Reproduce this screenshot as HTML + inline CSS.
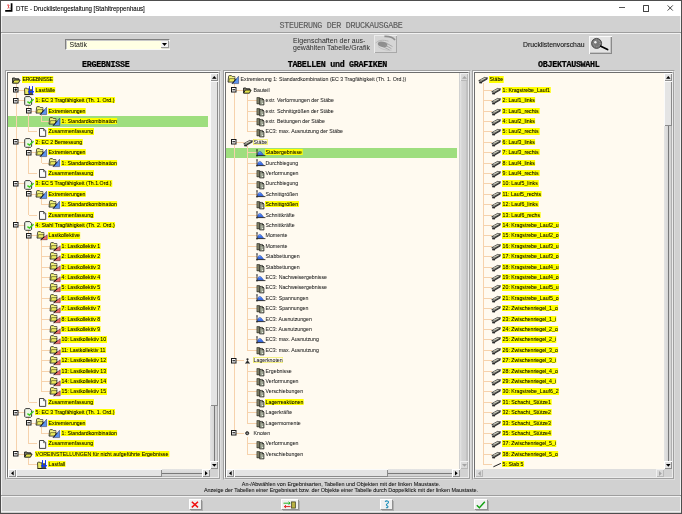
<!DOCTYPE html>
<html><head><meta charset="utf-8"><style>
html,body{margin:0;padding:0;width:682px;height:514px;overflow:hidden;background:#d1d1d1}
body{position:relative;font-family:'Liberation Sans',sans-serif;}
div{box-sizing:content-box}
</style></head><body>
<div style="position:absolute;left:0;top:0;width:682px;height:514px;will-change:transform"><div style="position:absolute;left:0px;top:0px;width:680px;height:512px;border:1px solid #4e4e4e;background:#d1d1d1"></div><div style="position:absolute;left:1px;top:16px;width:678px;height:495px;border:1px solid #f0f0f0;border-top:none"></div><div style="position:absolute;left:1px;top:1px;width:680px;height:15px;background:#ffffff"></div><svg style="position:absolute;left:5px;top:3px;overflow:visible" width="9" height="10" viewBox="0 0 9 10"><path d="M6.6,0.2 V7.9 H0.2" fill="none" stroke="#000" stroke-width="1.7"/><path d="M2.2,2.2 C3.2,1.6 4.4,1.9 3.8,3 L3,3.6 C4.2,3.8 4.2,5 2.6,5.3" fill="none" stroke="#e01818" stroke-width="0.9"/><path d="M4.2,6 h1.4 v-1.6" stroke="#888" stroke-width="0.7" fill="none"/></svg><div style="position:absolute;left:16px;top:3.6px;height:9px;line-height:9px;font-size:6.9px;color:#000;-webkit-text-stroke:0.1px #000;transform:scaleX(0.885);transform-origin:0 0;font-family:'Liberation Sans',sans-serif;white-space:nowrap">DTE - Drucklistengestaltung [Stahltreppenhaus]</div><div style="position:absolute;left:619px;top:7.4px;width:6px;height:0.8px;background:#555"></div><div style="position:absolute;left:643px;top:5.3px;width:4.3px;height:4.3px;border:0.7px solid #444;border-radius:0.6px"></div><svg style="position:absolute;left:666.5px;top:4.8px;overflow:visible" width="7" height="7" viewBox="0 0 7 7"><path d="M0.6,0.4 L5.8,5.6 M5.8,0.4 L0.6,5.6" stroke="#222" stroke-width="0.85"/></svg><div style="position:absolute;left:1px;top:32px;width:680px;height:1px;background:#9e9e9e"></div><div style="position:absolute;left:1px;top:33px;width:680px;height:1px;background:#f2f2f2"></div><div style="position:absolute;left:0;width:682px;top:22.4px;text-align:center;height:9px;line-height:9px;font-family:'Liberation Mono',monospace;font-size:8.4px;letter-spacing:-0.3px;color:#5a5a5a;-webkit-text-stroke:0.1px #5a5a5a;white-space:nowrap">STEUERUNG DER DRUCKAUSGABE</div><div style="position:absolute;left:65px;top:39px;width:105px;height:11px;background:#ffffe4;border-top:1px solid #808080;border-left:1px solid #808080;border-right:1px solid #f8f8f8;border-bottom:1px solid #f8f8f8;box-sizing:border-box"></div><div style="position:absolute;left:66px;top:40px;width:1px;height:9px;background:#c8c8c8"></div><div style="position:absolute;left:66px;top:40px;width:103px;height:1px;background:#c8c8c8"></div><div style="position:absolute;left:69.6px;top:40px;height:9px;line-height:9.4px;font-size:6.9px;color:#111;font-family:'Liberation Sans',sans-serif;">Statik</div><div style="position:absolute;left:161px;top:41px;width:7.5px;height:7px;background:#f4f4f4;box-shadow:inset -1px -1px 0 #9a9a9a, 0.5px 0.5px 0 #c0c0c0"></div><svg style="position:absolute;left:162.3px;top:43.2px;overflow:visible" width="5" height="3" viewBox="0 0 5 3"><path d="M0,0 L5,0 L2.5,3 Z" fill="#000"/></svg><div style="position:absolute;left:293px;top:38.4px;line-height:6.6px;font-size:6.95px;color:#2a2a2a;letter-spacing:0.05px;font-family:'Liberation Sans',sans-serif;white-space:nowrap">Eigenschaften der aus-<br>gewählten Tabelle/Grafik</div><div style="position:absolute;left:374px;top:35px;width:23px;height:18px;background:#d6d6d6;box-shadow:inset 1px 1px 0 #ececec, inset -1px -1px 0 #a8a8a8"></div><svg style="position:absolute;left:374px;top:35px;overflow:visible" width="23" height="18" viewBox="0 0 23 18"><path d="M10.4,1.4 C14,1.2 19,2.4 21,5" fill="none" stroke="#8e8e8e" stroke-width="1.6"/><path d="M1.6,8.2 C4,5.2 9,4.4 14.5,6.2" fill="none" stroke="#b2b2b2" stroke-width="0.9"/><ellipse cx="8.6" cy="9.3" rx="4.9" ry="2.7" transform="rotate(12 8.6 9.3)" fill="#8e8e8e"/><path d="M11.5,7.6 L18.5,11.6 M10.4,9.8 L17.4,13.6 M9,11.6 L15.6,15" fill="none" stroke="#9a9a9a" stroke-width="0.75"/><path d="M4.2,11.6 C7,14.2 12,15.6 17.5,15.2" fill="none" stroke="#b6b6b6" stroke-width="0.6"/></svg><div style="position:absolute;left:523px;top:40.6px;height:8px;line-height:8px;font-size:6.84px;color:#111;-webkit-text-stroke:0.08px #111;font-family:'Liberation Sans',sans-serif;white-space:nowrap">Drucklistenvorschau</div><div style="position:absolute;left:589px;top:36px;width:23px;height:18px;background:#e4e4e4;box-shadow:inset 1px 1px 0 #fafafa, inset -1px -1px 0 #8a8a8a, inset -2px -2px 0 #c4c4c4"></div><svg style="position:absolute;left:589px;top:36px;overflow:visible" width="23" height="18" viewBox="0 0 23 18"><circle cx="7.6" cy="7.4" r="5" fill="#767676" stroke="#444" stroke-width="0.9"/><circle cx="7.6" cy="7.4" r="3.4" fill="none" stroke="#b4b4b4" stroke-width="0.7" stroke-dasharray="0.7 1"/><circle cx="6.4" cy="6.2" r="1.2" fill="#f4f4f4"/><path d="M11.8,10.2 L18.6,13.6" stroke="#000" stroke-width="1.7" stroke-linecap="round"/></svg><div style="position:absolute;left:5.75px;width:200px;top:61.1px;height:9px;line-height:9px;text-align:center;font-family:'Liberation Mono',monospace;font-weight:bold;font-size:8.4px;letter-spacing:-0.3px;color:#000;-webkit-text-stroke:0.2px #000;white-space:nowrap">ERGEBNISSE</div><div style="position:absolute;left:237.3px;width:200px;top:61.1px;height:9px;line-height:9px;text-align:center;font-family:'Liberation Mono',monospace;font-weight:bold;font-size:8.4px;letter-spacing:-0.3px;color:#000;-webkit-text-stroke:0.2px #000;white-space:nowrap">TABELLEN und GRAFIKEN</div><div style="position:absolute;left:468.79999999999995px;width:200px;top:61.1px;height:9px;line-height:9px;text-align:center;font-family:'Liberation Mono',monospace;font-weight:bold;font-size:8.4px;letter-spacing:-0.3px;color:#000;-webkit-text-stroke:0.2px #000;white-space:nowrap">OBJEKTAUSWAHL</div><div style="position:absolute;left:5px;top:70px;width:214px;height:408px;border:1px solid;border-color:#a0a0a0 #dedede #dedede #a0a0a0"></div><div style="position:absolute;left:6px;top:71px;width:212px;height:406px;border:1px solid;border-color:#fafafa #a0a0a0 #a0a0a0 #fafafa"></div><div style="position:absolute;left:7px;top:72px;width:210px;height:404px;border:1px solid;border-color:#6e6e6e #ececec #ececec #6e6e6e"></div><div style="position:absolute;left:8px;top:73px;width:202px;height:396px;overflow:hidden;background:#fffaf0"><div style="position:absolute;left:-8px;top:-73px;width:682px;height:514px"><div style="position:absolute;left:8px;top:116.30px;width:200px;height:10.4px;background:#9ede7e"></div><div style="position:absolute;left:15.50px;top:83.10px;width:1px;height:371.30px;background:#f6d2ac"></div><div style="position:absolute;left:16.00px;top:89.80px;width:9.00px;height:1px;background:#f6d2ac"></div><div style="position:absolute;left:28.30px;top:103.90px;width:1px;height:28.10px;background:#f6d2ac"></div><div style="position:absolute;left:16.00px;top:100.20px;width:9.00px;height:1px;background:#f6d2ac"></div><div style="position:absolute;left:41.30px;top:114.30px;width:1px;height:7.30px;background:#f6d2ac"></div><div style="position:absolute;left:28.80px;top:110.60px;width:8.30px;height:1px;background:#f6d2ac"></div><div style="position:absolute;left:41.80px;top:121.00px;width:8.50px;height:1px;background:#f6d2ac"></div><div style="position:absolute;left:28.80px;top:131.40px;width:8.30px;height:1px;background:#f6d2ac"></div><div style="position:absolute;left:28.30px;top:145.50px;width:1px;height:28.10px;background:#f6d2ac"></div><div style="position:absolute;left:16.00px;top:141.80px;width:9.00px;height:1px;background:#f6d2ac"></div><div style="position:absolute;left:41.30px;top:155.90px;width:1px;height:7.30px;background:#f6d2ac"></div><div style="position:absolute;left:28.80px;top:152.20px;width:8.30px;height:1px;background:#f6d2ac"></div><div style="position:absolute;left:41.80px;top:162.60px;width:8.50px;height:1px;background:#f6d2ac"></div><div style="position:absolute;left:28.80px;top:173.00px;width:8.30px;height:1px;background:#f6d2ac"></div><div style="position:absolute;left:28.30px;top:187.10px;width:1px;height:28.10px;background:#f6d2ac"></div><div style="position:absolute;left:16.00px;top:183.40px;width:9.00px;height:1px;background:#f6d2ac"></div><div style="position:absolute;left:41.30px;top:197.50px;width:1px;height:7.30px;background:#f6d2ac"></div><div style="position:absolute;left:28.80px;top:193.80px;width:8.30px;height:1px;background:#f6d2ac"></div><div style="position:absolute;left:41.80px;top:204.20px;width:8.50px;height:1px;background:#f6d2ac"></div><div style="position:absolute;left:28.80px;top:214.60px;width:8.30px;height:1px;background:#f6d2ac"></div><div style="position:absolute;left:28.30px;top:228.70px;width:1px;height:173.70px;background:#f6d2ac"></div><div style="position:absolute;left:16.00px;top:225.00px;width:9.00px;height:1px;background:#f6d2ac"></div><div style="position:absolute;left:41.30px;top:239.10px;width:1px;height:152.90px;background:#f6d2ac"></div><div style="position:absolute;left:28.80px;top:235.40px;width:8.30px;height:1px;background:#f6d2ac"></div><div style="position:absolute;left:41.80px;top:245.80px;width:8.50px;height:1px;background:#f6d2ac"></div><div style="position:absolute;left:41.80px;top:256.20px;width:8.50px;height:1px;background:#f6d2ac"></div><div style="position:absolute;left:41.80px;top:266.60px;width:8.50px;height:1px;background:#f6d2ac"></div><div style="position:absolute;left:41.80px;top:277.00px;width:8.50px;height:1px;background:#f6d2ac"></div><div style="position:absolute;left:41.80px;top:287.40px;width:8.50px;height:1px;background:#f6d2ac"></div><div style="position:absolute;left:41.80px;top:297.80px;width:8.50px;height:1px;background:#f6d2ac"></div><div style="position:absolute;left:41.80px;top:308.20px;width:8.50px;height:1px;background:#f6d2ac"></div><div style="position:absolute;left:41.80px;top:318.60px;width:8.50px;height:1px;background:#f6d2ac"></div><div style="position:absolute;left:41.80px;top:329.00px;width:8.50px;height:1px;background:#f6d2ac"></div><div style="position:absolute;left:41.80px;top:339.40px;width:8.50px;height:1px;background:#f6d2ac"></div><div style="position:absolute;left:41.80px;top:349.80px;width:8.50px;height:1px;background:#f6d2ac"></div><div style="position:absolute;left:41.80px;top:360.20px;width:8.50px;height:1px;background:#f6d2ac"></div><div style="position:absolute;left:41.80px;top:370.60px;width:8.50px;height:1px;background:#f6d2ac"></div><div style="position:absolute;left:41.80px;top:381.00px;width:8.50px;height:1px;background:#f6d2ac"></div><div style="position:absolute;left:41.80px;top:391.40px;width:8.50px;height:1px;background:#f6d2ac"></div><div style="position:absolute;left:28.80px;top:401.80px;width:8.30px;height:1px;background:#f6d2ac"></div><div style="position:absolute;left:28.30px;top:415.90px;width:1px;height:28.10px;background:#f6d2ac"></div><div style="position:absolute;left:16.00px;top:412.20px;width:9.00px;height:1px;background:#f6d2ac"></div><div style="position:absolute;left:41.30px;top:426.30px;width:1px;height:7.30px;background:#f6d2ac"></div><div style="position:absolute;left:28.80px;top:422.60px;width:8.30px;height:1px;background:#f6d2ac"></div><div style="position:absolute;left:41.80px;top:433.00px;width:8.50px;height:1px;background:#f6d2ac"></div><div style="position:absolute;left:28.80px;top:443.40px;width:8.30px;height:1px;background:#f6d2ac"></div><div style="position:absolute;left:28.30px;top:457.50px;width:1px;height:7.30px;background:#f6d2ac"></div><div style="position:absolute;left:16.00px;top:453.80px;width:9.00px;height:1px;background:#f6d2ac"></div><div style="position:absolute;left:28.80px;top:464.20px;width:8.30px;height:1px;background:#f6d2ac"></div><svg style="position:absolute;left:12.2px;top:76.5px;overflow:visible" width="9" height="7" viewBox="0 0 9 7"><path d="M0.6,6 V1 h2.3 l0.8,0.8 h3.1 v1.3" fill="#8a8a70" stroke="#161616" stroke-width="0.9" stroke-linejoin="round"/><path d="M0.6,6.2 l1.7,-3.2 h5.8 l-1.7,3.2 z" fill="#e4e44c" stroke="#161616" stroke-width="0.9" stroke-linejoin="round"/></svg><div style="position:absolute;left:21.90px;top:76.40px;height:6.2px;line-height:6.2px;padding:0 0.65px;font-size:5.7px;color:#000;letter-spacing:-0.45px;-webkit-text-stroke:0.06px #000;white-space:nowrap;transform:scaleX(0.92);transform-origin:0 0;background:#ffff00;">ERGEBNISSE</div><svg style="position:absolute;left:12.8px;top:87.15px;overflow:visible" width="5.5" height="5.5" viewBox="0 0 5.5 5.5"><rect x="0.5" y="0.5" width="4.5" height="4.5" fill="#fcfcfc" stroke="#1a1a1a" stroke-width="1"/><path d="M1.4,2.75 H4.1" stroke="#000" stroke-width="1"/><path d="M2.75,1.4 V4.1" stroke="#000" stroke-width="1"/></svg><svg style="position:absolute;left:24.4px;top:85.60000000000001px;overflow:visible" width="11" height="9" viewBox="0 0 11 9"><path d="M0.5,3 Q0.5,2.2 1.3,2.2 h1.6 l0.6,0.7 h1.6 v5.6 h-4.3 z" fill="#e8e866" stroke="#24240c" stroke-width="0.8"/><path d="M4.6,3.2 h4.4 v5.3 h-4.4 z" fill="#5a5a30"/><path d="M0.5,8.6 H9.4" stroke="#1c1c0c" stroke-width="0.9"/><path d="M5.5,0.1 v5.6 M8.5,0.1 v5.6" stroke="#1238f0" stroke-width="1"/><path d="M3.9,5 l1.6,3.6 l1.6,-3.6 z M6.9,5 l1.6,3.6 l1.6,-3.6 z" fill="#1238f0"/></svg><div style="position:absolute;left:34.60px;top:86.80px;height:6.2px;line-height:6.2px;padding:0 0.65px;font-size:5.7px;color:#000;letter-spacing:0.0px;-webkit-text-stroke:0.06px #000;white-space:nowrap;transform:scaleX(0.92);transform-origin:0 0;background:#ffff00;">Lastfälle</div><svg style="position:absolute;left:12.8px;top:97.55px;overflow:visible" width="5.5" height="5.5" viewBox="0 0 5.5 5.5"><rect x="0.5" y="0.5" width="4.5" height="4.5" fill="#fcfcfc" stroke="#1a1a1a" stroke-width="1"/><path d="M1.4,2.75 H4.1" stroke="#000" stroke-width="1"/></svg><svg style="position:absolute;left:24px;top:96.3px;overflow:visible" width="10" height="10" viewBox="0 0 10 10"><path d="M1.6,0.6 h4.2 l1.8,1.8 v6 l-1,0.9 h-5 l-0.9,-0.9 v-6.6 z" fill="#eef6e8" stroke="#262626" stroke-width="0.9" stroke-linejoin="round"/><path d="M3.4,5.6 L5.5,7.1 L9.6,3.3" fill="none" stroke="#3ad01a" stroke-width="1.4"/></svg><div style="position:absolute;left:34.60px;top:97.20px;height:6.2px;line-height:6.2px;padding:0 0.65px;font-size:5.7px;color:#000;letter-spacing:0.0px;-webkit-text-stroke:0.06px #000;white-space:nowrap;transform:scaleX(0.92);transform-origin:0 0;background:#ffff00;">1: EC 3 Tragfähigkeit (Th. 1. Ord.)</div><svg style="position:absolute;left:25.6px;top:107.95px;overflow:visible" width="5.5" height="5.5" viewBox="0 0 5.5 5.5"><rect x="0.5" y="0.5" width="4.5" height="4.5" fill="#fcfcfc" stroke="#1a1a1a" stroke-width="1"/><path d="M1.4,2.75 H4.1" stroke="#000" stroke-width="1"/></svg><svg style="position:absolute;left:36.1px;top:106.4px;overflow:visible" width="12" height="10" viewBox="0 0 12 10"><path d="M0.6,1.4 Q0.6,0.6 1.4,0.6 h2 l0.8,0.9 h2.6 v5.6 h-6.8 z" fill="#e8e85c" stroke="#2a2a2a" stroke-width="0.8" stroke-linejoin="round"/><path d="M1.2,2.3 h5.6" stroke="#f8f8b0" stroke-width="0.7"/><path d="M0.6,7.2 L1.6,3.6 H7.4" fill="none" stroke="#303020" stroke-width="0.5"/><path d="M4.2,8.6 L10.6,1.2 V8.6 Z" fill="#5c92ee" stroke="#1a2040" stroke-width="0.45" stroke-linejoin="round"/><path d="M4.2,8.6 L8,4.2" stroke="#000" stroke-width="0.9"/></svg><div style="position:absolute;left:47.80px;top:107.60px;height:6.2px;line-height:6.2px;padding:0 0.65px;font-size:5.7px;color:#000;letter-spacing:0.0px;-webkit-text-stroke:0.06px #000;white-space:nowrap;transform:scaleX(0.92);transform-origin:0 0;background:#ffff00;">Extremierungen</div><svg style="position:absolute;left:49.3px;top:116.8px;overflow:visible" width="12" height="10" viewBox="0 0 12 10"><path d="M0.6,1.4 Q0.6,0.6 1.4,0.6 h2 l0.8,0.9 h2.6 v5.6 h-6.8 z" fill="#e8e85c" stroke="#2a2a2a" stroke-width="0.8" stroke-linejoin="round"/><path d="M1.2,2.3 h5.6" stroke="#f8f8b0" stroke-width="0.7"/><path d="M0.6,7.2 L1.6,3.6 H7.4" fill="none" stroke="#303020" stroke-width="0.5"/><path d="M4.2,8.6 L10.6,1.2 V8.6 Z" fill="#5c92ee" stroke="#1a2040" stroke-width="0.45" stroke-linejoin="round"/><path d="M4.2,8.6 L8,4.2" stroke="#000" stroke-width="0.9"/></svg><div style="position:absolute;left:60.80px;top:118.00px;height:6.2px;line-height:6.2px;padding:0 0.65px;font-size:5.7px;color:#000;letter-spacing:0.0px;-webkit-text-stroke:0.06px #000;white-space:nowrap;transform:scaleX(0.92);transform-origin:0 0;background:#ffff00;">1: Standardkombination</div><svg style="position:absolute;left:39.0px;top:127.5px;overflow:visible" width="8" height="9" viewBox="0 0 8 9"><path d="M0.5,0.5 h4.2 l2,2 v5.9 h-6.2 z" fill="#fbfbfb" stroke="#262626" stroke-width="0.85" stroke-linejoin="round"/><path d="M4.5,0.6 v2.1 h2" fill="none" stroke="#262626" stroke-width="0.6"/></svg><div style="position:absolute;left:47.80px;top:128.40px;height:6.2px;line-height:6.2px;padding:0 0.65px;font-size:5.7px;color:#000;letter-spacing:0.0px;-webkit-text-stroke:0.06px #000;white-space:nowrap;transform:scaleX(0.92);transform-origin:0 0;background:#ffff00;">Zusammenfassung</div><svg style="position:absolute;left:12.8px;top:139.15px;overflow:visible" width="5.5" height="5.5" viewBox="0 0 5.5 5.5"><rect x="0.5" y="0.5" width="4.5" height="4.5" fill="#fcfcfc" stroke="#1a1a1a" stroke-width="1"/><path d="M1.4,2.75 H4.1" stroke="#000" stroke-width="1"/></svg><svg style="position:absolute;left:24px;top:137.9px;overflow:visible" width="10" height="10" viewBox="0 0 10 10"><path d="M1.6,0.6 h4.2 l1.8,1.8 v6 l-1,0.9 h-5 l-0.9,-0.9 v-6.6 z" fill="#eef6e8" stroke="#262626" stroke-width="0.9" stroke-linejoin="round"/><path d="M3.4,5.6 L5.5,7.1 L9.6,3.3" fill="none" stroke="#3ad01a" stroke-width="1.4"/></svg><div style="position:absolute;left:34.60px;top:138.80px;height:6.2px;line-height:6.2px;padding:0 0.65px;font-size:5.7px;color:#000;letter-spacing:0.0px;-webkit-text-stroke:0.06px #000;white-space:nowrap;transform:scaleX(0.92);transform-origin:0 0;background:#ffff00;">2: EC 2 Bemessung</div><svg style="position:absolute;left:25.6px;top:149.55px;overflow:visible" width="5.5" height="5.5" viewBox="0 0 5.5 5.5"><rect x="0.5" y="0.5" width="4.5" height="4.5" fill="#fcfcfc" stroke="#1a1a1a" stroke-width="1"/><path d="M1.4,2.75 H4.1" stroke="#000" stroke-width="1"/></svg><svg style="position:absolute;left:36.1px;top:148.0px;overflow:visible" width="12" height="10" viewBox="0 0 12 10"><path d="M0.6,1.4 Q0.6,0.6 1.4,0.6 h2 l0.8,0.9 h2.6 v5.6 h-6.8 z" fill="#e8e85c" stroke="#2a2a2a" stroke-width="0.8" stroke-linejoin="round"/><path d="M1.2,2.3 h5.6" stroke="#f8f8b0" stroke-width="0.7"/><path d="M0.6,7.2 L1.6,3.6 H7.4" fill="none" stroke="#303020" stroke-width="0.5"/><path d="M4.2,8.6 L10.6,1.2 V8.6 Z" fill="#5c92ee" stroke="#1a2040" stroke-width="0.45" stroke-linejoin="round"/><path d="M4.2,8.6 L8,4.2" stroke="#000" stroke-width="0.9"/></svg><div style="position:absolute;left:47.80px;top:149.20px;height:6.2px;line-height:6.2px;padding:0 0.65px;font-size:5.7px;color:#000;letter-spacing:0.0px;-webkit-text-stroke:0.06px #000;white-space:nowrap;transform:scaleX(0.92);transform-origin:0 0;background:#ffff00;">Extremierungen</div><svg style="position:absolute;left:49.3px;top:158.39999999999998px;overflow:visible" width="12" height="10" viewBox="0 0 12 10"><path d="M0.6,1.4 Q0.6,0.6 1.4,0.6 h2 l0.8,0.9 h2.6 v5.6 h-6.8 z" fill="#e8e85c" stroke="#2a2a2a" stroke-width="0.8" stroke-linejoin="round"/><path d="M1.2,2.3 h5.6" stroke="#f8f8b0" stroke-width="0.7"/><path d="M0.6,7.2 L1.6,3.6 H7.4" fill="none" stroke="#303020" stroke-width="0.5"/><path d="M4.2,8.6 L10.6,1.2 V8.6 Z" fill="#5c92ee" stroke="#1a2040" stroke-width="0.45" stroke-linejoin="round"/><path d="M4.2,8.6 L8,4.2" stroke="#000" stroke-width="0.9"/></svg><div style="position:absolute;left:60.80px;top:159.60px;height:6.2px;line-height:6.2px;padding:0 0.65px;font-size:5.7px;color:#000;letter-spacing:0.0px;-webkit-text-stroke:0.06px #000;white-space:nowrap;transform:scaleX(0.92);transform-origin:0 0;background:#ffff00;">1: Standardkombination</div><svg style="position:absolute;left:39.0px;top:169.10000000000002px;overflow:visible" width="8" height="9" viewBox="0 0 8 9"><path d="M0.5,0.5 h4.2 l2,2 v5.9 h-6.2 z" fill="#fbfbfb" stroke="#262626" stroke-width="0.85" stroke-linejoin="round"/><path d="M4.5,0.6 v2.1 h2" fill="none" stroke="#262626" stroke-width="0.6"/></svg><div style="position:absolute;left:47.80px;top:170.00px;height:6.2px;line-height:6.2px;padding:0 0.65px;font-size:5.7px;color:#000;letter-spacing:0.0px;-webkit-text-stroke:0.06px #000;white-space:nowrap;transform:scaleX(0.92);transform-origin:0 0;background:#ffff00;">Zusammenfassung</div><svg style="position:absolute;left:12.8px;top:180.75px;overflow:visible" width="5.5" height="5.5" viewBox="0 0 5.5 5.5"><rect x="0.5" y="0.5" width="4.5" height="4.5" fill="#fcfcfc" stroke="#1a1a1a" stroke-width="1"/><path d="M1.4,2.75 H4.1" stroke="#000" stroke-width="1"/></svg><svg style="position:absolute;left:24px;top:179.5px;overflow:visible" width="10" height="10" viewBox="0 0 10 10"><path d="M1.6,0.6 h4.2 l1.8,1.8 v6 l-1,0.9 h-5 l-0.9,-0.9 v-6.6 z" fill="#eef6e8" stroke="#262626" stroke-width="0.9" stroke-linejoin="round"/><path d="M3.4,5.6 L5.5,7.1 L9.6,3.3" fill="none" stroke="#3ad01a" stroke-width="1.4"/></svg><div style="position:absolute;left:34.60px;top:180.40px;height:6.2px;line-height:6.2px;padding:0 0.65px;font-size:5.7px;color:#000;letter-spacing:0.0px;-webkit-text-stroke:0.06px #000;white-space:nowrap;transform:scaleX(0.92);transform-origin:0 0;background:#ffff00;">3: EC 5 Tragfähigkeit (Th.1.Ord.)</div><svg style="position:absolute;left:25.6px;top:191.15px;overflow:visible" width="5.5" height="5.5" viewBox="0 0 5.5 5.5"><rect x="0.5" y="0.5" width="4.5" height="4.5" fill="#fcfcfc" stroke="#1a1a1a" stroke-width="1"/><path d="M1.4,2.75 H4.1" stroke="#000" stroke-width="1"/></svg><svg style="position:absolute;left:36.1px;top:189.6px;overflow:visible" width="12" height="10" viewBox="0 0 12 10"><path d="M0.6,1.4 Q0.6,0.6 1.4,0.6 h2 l0.8,0.9 h2.6 v5.6 h-6.8 z" fill="#e8e85c" stroke="#2a2a2a" stroke-width="0.8" stroke-linejoin="round"/><path d="M1.2,2.3 h5.6" stroke="#f8f8b0" stroke-width="0.7"/><path d="M0.6,7.2 L1.6,3.6 H7.4" fill="none" stroke="#303020" stroke-width="0.5"/><path d="M4.2,8.6 L10.6,1.2 V8.6 Z" fill="#5c92ee" stroke="#1a2040" stroke-width="0.45" stroke-linejoin="round"/><path d="M4.2,8.6 L8,4.2" stroke="#000" stroke-width="0.9"/></svg><div style="position:absolute;left:47.80px;top:190.80px;height:6.2px;line-height:6.2px;padding:0 0.65px;font-size:5.7px;color:#000;letter-spacing:0.0px;-webkit-text-stroke:0.06px #000;white-space:nowrap;transform:scaleX(0.92);transform-origin:0 0;background:#ffff00;">Extremierungen</div><svg style="position:absolute;left:49.3px;top:200.0px;overflow:visible" width="12" height="10" viewBox="0 0 12 10"><path d="M0.6,1.4 Q0.6,0.6 1.4,0.6 h2 l0.8,0.9 h2.6 v5.6 h-6.8 z" fill="#e8e85c" stroke="#2a2a2a" stroke-width="0.8" stroke-linejoin="round"/><path d="M1.2,2.3 h5.6" stroke="#f8f8b0" stroke-width="0.7"/><path d="M0.6,7.2 L1.6,3.6 H7.4" fill="none" stroke="#303020" stroke-width="0.5"/><path d="M4.2,8.6 L10.6,1.2 V8.6 Z" fill="#5c92ee" stroke="#1a2040" stroke-width="0.45" stroke-linejoin="round"/><path d="M4.2,8.6 L8,4.2" stroke="#000" stroke-width="0.9"/></svg><div style="position:absolute;left:60.80px;top:201.20px;height:6.2px;line-height:6.2px;padding:0 0.65px;font-size:5.7px;color:#000;letter-spacing:0.0px;-webkit-text-stroke:0.06px #000;white-space:nowrap;transform:scaleX(0.92);transform-origin:0 0;background:#ffff00;">1: Standardkombination</div><svg style="position:absolute;left:39.0px;top:210.70000000000002px;overflow:visible" width="8" height="9" viewBox="0 0 8 9"><path d="M0.5,0.5 h4.2 l2,2 v5.9 h-6.2 z" fill="#fbfbfb" stroke="#262626" stroke-width="0.85" stroke-linejoin="round"/><path d="M4.5,0.6 v2.1 h2" fill="none" stroke="#262626" stroke-width="0.6"/></svg><div style="position:absolute;left:47.80px;top:211.60px;height:6.2px;line-height:6.2px;padding:0 0.65px;font-size:5.7px;color:#000;letter-spacing:0.0px;-webkit-text-stroke:0.06px #000;white-space:nowrap;transform:scaleX(0.92);transform-origin:0 0;background:#ffff00;">Zusammenfassung</div><svg style="position:absolute;left:12.8px;top:222.35px;overflow:visible" width="5.5" height="5.5" viewBox="0 0 5.5 5.5"><rect x="0.5" y="0.5" width="4.5" height="4.5" fill="#fcfcfc" stroke="#1a1a1a" stroke-width="1"/><path d="M1.4,2.75 H4.1" stroke="#000" stroke-width="1"/></svg><svg style="position:absolute;left:24px;top:221.1px;overflow:visible" width="10" height="10" viewBox="0 0 10 10"><path d="M1.6,0.6 h4.2 l1.8,1.8 v6 l-1,0.9 h-5 l-0.9,-0.9 v-6.6 z" fill="#eef6e8" stroke="#262626" stroke-width="0.9" stroke-linejoin="round"/><path d="M3.4,5.6 L5.5,7.1 L9.6,3.3" fill="none" stroke="#3ad01a" stroke-width="1.4"/></svg><div style="position:absolute;left:34.60px;top:222.00px;height:6.2px;line-height:6.2px;padding:0 0.65px;font-size:5.7px;color:#000;letter-spacing:0.0px;-webkit-text-stroke:0.06px #000;white-space:nowrap;transform:scaleX(0.92);transform-origin:0 0;background:#ffff00;">4: Stahl Tragfähigkeit (Th. 2. Ord.)</div><svg style="position:absolute;left:25.6px;top:232.75px;overflow:visible" width="5.5" height="5.5" viewBox="0 0 5.5 5.5"><rect x="0.5" y="0.5" width="4.5" height="4.5" fill="#fcfcfc" stroke="#1a1a1a" stroke-width="1"/><path d="M1.4,2.75 H4.1" stroke="#000" stroke-width="1"/></svg><svg style="position:absolute;left:36.9px;top:231.2px;overflow:visible" width="12" height="10" viewBox="0 0 12 10"><path d="M0.6,1.4 Q0.6,0.6 1.4,0.6 h2 l0.8,0.9 h2.6 v5.6 h-6.8 z" fill="#e8e85c" stroke="#2a2a2a" stroke-width="0.8" stroke-linejoin="round"/><path d="M1.2,2.3 h5.6" stroke="#f8f8b0" stroke-width="0.7"/><path d="M0.6,7.2 L1.6,3.6 H7.4" fill="none" stroke="#303020" stroke-width="0.5"/><path d="M3.7,8.7 L10.2,3.8 V8.7 Z" fill="#f06c6c" stroke="#301010" stroke-width="0.45" stroke-linejoin="round"/><path d="M3.7,8.7 L7.4,5.9" stroke="#000" stroke-width="0.9"/></svg><div style="position:absolute;left:47.80px;top:232.40px;height:6.2px;line-height:6.2px;padding:0 0.65px;font-size:5.7px;color:#000;letter-spacing:0.0px;-webkit-text-stroke:0.06px #000;white-space:nowrap;transform:scaleX(0.92);transform-origin:0 0;background:#ffff00;">Lastkollektive</div><svg style="position:absolute;left:50.099999999999994px;top:241.6px;overflow:visible" width="12" height="10" viewBox="0 0 12 10"><path d="M0.6,1.4 Q0.6,0.6 1.4,0.6 h2 l0.8,0.9 h2.6 v5.6 h-6.8 z" fill="#e8e85c" stroke="#2a2a2a" stroke-width="0.8" stroke-linejoin="round"/><path d="M1.2,2.3 h5.6" stroke="#f8f8b0" stroke-width="0.7"/><path d="M0.6,7.2 L1.6,3.6 H7.4" fill="none" stroke="#303020" stroke-width="0.5"/><path d="M3.7,8.7 L10.2,3.8 V8.7 Z" fill="#f06c6c" stroke="#301010" stroke-width="0.45" stroke-linejoin="round"/><path d="M3.7,8.7 L7.4,5.9" stroke="#000" stroke-width="0.9"/></svg><div style="position:absolute;left:60.80px;top:242.80px;height:6.2px;line-height:6.2px;padding:0 0.65px;font-size:5.7px;color:#000;letter-spacing:0.0px;-webkit-text-stroke:0.06px #000;white-space:nowrap;transform:scaleX(0.92);transform-origin:0 0;background:#ffff00;">1: Lastkollektiv 1</div><svg style="position:absolute;left:50.099999999999994px;top:252.0px;overflow:visible" width="12" height="10" viewBox="0 0 12 10"><path d="M0.6,1.4 Q0.6,0.6 1.4,0.6 h2 l0.8,0.9 h2.6 v5.6 h-6.8 z" fill="#e8e85c" stroke="#2a2a2a" stroke-width="0.8" stroke-linejoin="round"/><path d="M1.2,2.3 h5.6" stroke="#f8f8b0" stroke-width="0.7"/><path d="M0.6,7.2 L1.6,3.6 H7.4" fill="none" stroke="#303020" stroke-width="0.5"/><path d="M3.7,8.7 L10.2,3.8 V8.7 Z" fill="#f06c6c" stroke="#301010" stroke-width="0.45" stroke-linejoin="round"/><path d="M3.7,8.7 L7.4,5.9" stroke="#000" stroke-width="0.9"/></svg><div style="position:absolute;left:60.80px;top:253.20px;height:6.2px;line-height:6.2px;padding:0 0.65px;font-size:5.7px;color:#000;letter-spacing:0.0px;-webkit-text-stroke:0.06px #000;white-space:nowrap;transform:scaleX(0.92);transform-origin:0 0;background:#ffff00;">2: Lastkollektiv 2</div><svg style="position:absolute;left:50.099999999999994px;top:262.40000000000003px;overflow:visible" width="12" height="10" viewBox="0 0 12 10"><path d="M0.6,1.4 Q0.6,0.6 1.4,0.6 h2 l0.8,0.9 h2.6 v5.6 h-6.8 z" fill="#e8e85c" stroke="#2a2a2a" stroke-width="0.8" stroke-linejoin="round"/><path d="M1.2,2.3 h5.6" stroke="#f8f8b0" stroke-width="0.7"/><path d="M0.6,7.2 L1.6,3.6 H7.4" fill="none" stroke="#303020" stroke-width="0.5"/><path d="M3.7,8.7 L10.2,3.8 V8.7 Z" fill="#f06c6c" stroke="#301010" stroke-width="0.45" stroke-linejoin="round"/><path d="M3.7,8.7 L7.4,5.9" stroke="#000" stroke-width="0.9"/></svg><div style="position:absolute;left:60.80px;top:263.60px;height:6.2px;line-height:6.2px;padding:0 0.65px;font-size:5.7px;color:#000;letter-spacing:0.0px;-webkit-text-stroke:0.06px #000;white-space:nowrap;transform:scaleX(0.92);transform-origin:0 0;background:#ffff00;">3: Lastkollektiv 3</div><svg style="position:absolute;left:50.099999999999994px;top:272.8px;overflow:visible" width="12" height="10" viewBox="0 0 12 10"><path d="M0.6,1.4 Q0.6,0.6 1.4,0.6 h2 l0.8,0.9 h2.6 v5.6 h-6.8 z" fill="#e8e85c" stroke="#2a2a2a" stroke-width="0.8" stroke-linejoin="round"/><path d="M1.2,2.3 h5.6" stroke="#f8f8b0" stroke-width="0.7"/><path d="M0.6,7.2 L1.6,3.6 H7.4" fill="none" stroke="#303020" stroke-width="0.5"/><path d="M3.7,8.7 L10.2,3.8 V8.7 Z" fill="#f06c6c" stroke="#301010" stroke-width="0.45" stroke-linejoin="round"/><path d="M3.7,8.7 L7.4,5.9" stroke="#000" stroke-width="0.9"/></svg><div style="position:absolute;left:60.80px;top:274.00px;height:6.2px;line-height:6.2px;padding:0 0.65px;font-size:5.7px;color:#000;letter-spacing:0.0px;-webkit-text-stroke:0.06px #000;white-space:nowrap;transform:scaleX(0.92);transform-origin:0 0;background:#ffff00;">4: Lastkollektiv 4</div><svg style="position:absolute;left:50.099999999999994px;top:283.2px;overflow:visible" width="12" height="10" viewBox="0 0 12 10"><path d="M0.6,1.4 Q0.6,0.6 1.4,0.6 h2 l0.8,0.9 h2.6 v5.6 h-6.8 z" fill="#e8e85c" stroke="#2a2a2a" stroke-width="0.8" stroke-linejoin="round"/><path d="M1.2,2.3 h5.6" stroke="#f8f8b0" stroke-width="0.7"/><path d="M0.6,7.2 L1.6,3.6 H7.4" fill="none" stroke="#303020" stroke-width="0.5"/><path d="M3.7,8.7 L10.2,3.8 V8.7 Z" fill="#f06c6c" stroke="#301010" stroke-width="0.45" stroke-linejoin="round"/><path d="M3.7,8.7 L7.4,5.9" stroke="#000" stroke-width="0.9"/></svg><div style="position:absolute;left:60.80px;top:284.40px;height:6.2px;line-height:6.2px;padding:0 0.65px;font-size:5.7px;color:#000;letter-spacing:0.0px;-webkit-text-stroke:0.06px #000;white-space:nowrap;transform:scaleX(0.92);transform-origin:0 0;background:#ffff00;">5: Lastkollektiv 5</div><svg style="position:absolute;left:50.099999999999994px;top:293.59999999999997px;overflow:visible" width="12" height="10" viewBox="0 0 12 10"><path d="M0.6,1.4 Q0.6,0.6 1.4,0.6 h2 l0.8,0.9 h2.6 v5.6 h-6.8 z" fill="#e8e85c" stroke="#2a2a2a" stroke-width="0.8" stroke-linejoin="round"/><path d="M1.2,2.3 h5.6" stroke="#f8f8b0" stroke-width="0.7"/><path d="M0.6,7.2 L1.6,3.6 H7.4" fill="none" stroke="#303020" stroke-width="0.5"/><path d="M3.7,8.7 L10.2,3.8 V8.7 Z" fill="#f06c6c" stroke="#301010" stroke-width="0.45" stroke-linejoin="round"/><path d="M3.7,8.7 L7.4,5.9" stroke="#000" stroke-width="0.9"/></svg><div style="position:absolute;left:60.80px;top:294.80px;height:6.2px;line-height:6.2px;padding:0 0.65px;font-size:5.7px;color:#000;letter-spacing:0.0px;-webkit-text-stroke:0.06px #000;white-space:nowrap;transform:scaleX(0.92);transform-origin:0 0;background:#ffff00;">6: Lastkollektiv 6</div><svg style="position:absolute;left:50.099999999999994px;top:304.0px;overflow:visible" width="12" height="10" viewBox="0 0 12 10"><path d="M0.6,1.4 Q0.6,0.6 1.4,0.6 h2 l0.8,0.9 h2.6 v5.6 h-6.8 z" fill="#e8e85c" stroke="#2a2a2a" stroke-width="0.8" stroke-linejoin="round"/><path d="M1.2,2.3 h5.6" stroke="#f8f8b0" stroke-width="0.7"/><path d="M0.6,7.2 L1.6,3.6 H7.4" fill="none" stroke="#303020" stroke-width="0.5"/><path d="M3.7,8.7 L10.2,3.8 V8.7 Z" fill="#f06c6c" stroke="#301010" stroke-width="0.45" stroke-linejoin="round"/><path d="M3.7,8.7 L7.4,5.9" stroke="#000" stroke-width="0.9"/></svg><div style="position:absolute;left:60.80px;top:305.20px;height:6.2px;line-height:6.2px;padding:0 0.65px;font-size:5.7px;color:#000;letter-spacing:0.0px;-webkit-text-stroke:0.06px #000;white-space:nowrap;transform:scaleX(0.92);transform-origin:0 0;background:#ffff00;">7: Lastkollektiv 7</div><svg style="position:absolute;left:50.099999999999994px;top:314.40000000000003px;overflow:visible" width="12" height="10" viewBox="0 0 12 10"><path d="M0.6,1.4 Q0.6,0.6 1.4,0.6 h2 l0.8,0.9 h2.6 v5.6 h-6.8 z" fill="#e8e85c" stroke="#2a2a2a" stroke-width="0.8" stroke-linejoin="round"/><path d="M1.2,2.3 h5.6" stroke="#f8f8b0" stroke-width="0.7"/><path d="M0.6,7.2 L1.6,3.6 H7.4" fill="none" stroke="#303020" stroke-width="0.5"/><path d="M3.7,8.7 L10.2,3.8 V8.7 Z" fill="#f06c6c" stroke="#301010" stroke-width="0.45" stroke-linejoin="round"/><path d="M3.7,8.7 L7.4,5.9" stroke="#000" stroke-width="0.9"/></svg><div style="position:absolute;left:60.80px;top:315.60px;height:6.2px;line-height:6.2px;padding:0 0.65px;font-size:5.7px;color:#000;letter-spacing:0.0px;-webkit-text-stroke:0.06px #000;white-space:nowrap;transform:scaleX(0.92);transform-origin:0 0;background:#ffff00;">8: Lastkollektiv 8</div><svg style="position:absolute;left:50.099999999999994px;top:324.8px;overflow:visible" width="12" height="10" viewBox="0 0 12 10"><path d="M0.6,1.4 Q0.6,0.6 1.4,0.6 h2 l0.8,0.9 h2.6 v5.6 h-6.8 z" fill="#e8e85c" stroke="#2a2a2a" stroke-width="0.8" stroke-linejoin="round"/><path d="M1.2,2.3 h5.6" stroke="#f8f8b0" stroke-width="0.7"/><path d="M0.6,7.2 L1.6,3.6 H7.4" fill="none" stroke="#303020" stroke-width="0.5"/><path d="M3.7,8.7 L10.2,3.8 V8.7 Z" fill="#f06c6c" stroke="#301010" stroke-width="0.45" stroke-linejoin="round"/><path d="M3.7,8.7 L7.4,5.9" stroke="#000" stroke-width="0.9"/></svg><div style="position:absolute;left:60.80px;top:326.00px;height:6.2px;line-height:6.2px;padding:0 0.65px;font-size:5.7px;color:#000;letter-spacing:0.0px;-webkit-text-stroke:0.06px #000;white-space:nowrap;transform:scaleX(0.92);transform-origin:0 0;background:#ffff00;">9: Lastkollektiv 9</div><svg style="position:absolute;left:50.099999999999994px;top:335.2px;overflow:visible" width="12" height="10" viewBox="0 0 12 10"><path d="M0.6,1.4 Q0.6,0.6 1.4,0.6 h2 l0.8,0.9 h2.6 v5.6 h-6.8 z" fill="#e8e85c" stroke="#2a2a2a" stroke-width="0.8" stroke-linejoin="round"/><path d="M1.2,2.3 h5.6" stroke="#f8f8b0" stroke-width="0.7"/><path d="M0.6,7.2 L1.6,3.6 H7.4" fill="none" stroke="#303020" stroke-width="0.5"/><path d="M3.7,8.7 L10.2,3.8 V8.7 Z" fill="#f06c6c" stroke="#301010" stroke-width="0.45" stroke-linejoin="round"/><path d="M3.7,8.7 L7.4,5.9" stroke="#000" stroke-width="0.9"/></svg><div style="position:absolute;left:60.80px;top:336.40px;height:6.2px;line-height:6.2px;padding:0 0.65px;font-size:5.7px;color:#000;letter-spacing:0.0px;-webkit-text-stroke:0.06px #000;white-space:nowrap;transform:scaleX(0.92);transform-origin:0 0;background:#ffff00;">10: Lastkollektiv 10</div><svg style="position:absolute;left:50.099999999999994px;top:345.6px;overflow:visible" width="12" height="10" viewBox="0 0 12 10"><path d="M0.6,1.4 Q0.6,0.6 1.4,0.6 h2 l0.8,0.9 h2.6 v5.6 h-6.8 z" fill="#e8e85c" stroke="#2a2a2a" stroke-width="0.8" stroke-linejoin="round"/><path d="M1.2,2.3 h5.6" stroke="#f8f8b0" stroke-width="0.7"/><path d="M0.6,7.2 L1.6,3.6 H7.4" fill="none" stroke="#303020" stroke-width="0.5"/><path d="M3.7,8.7 L10.2,3.8 V8.7 Z" fill="#f06c6c" stroke="#301010" stroke-width="0.45" stroke-linejoin="round"/><path d="M3.7,8.7 L7.4,5.9" stroke="#000" stroke-width="0.9"/></svg><div style="position:absolute;left:60.80px;top:346.80px;height:6.2px;line-height:6.2px;padding:0 0.65px;font-size:5.7px;color:#000;letter-spacing:0.0px;-webkit-text-stroke:0.06px #000;white-space:nowrap;transform:scaleX(0.92);transform-origin:0 0;background:#ffff00;">11: Lastkollektiv 11</div><svg style="position:absolute;left:50.099999999999994px;top:356.0px;overflow:visible" width="12" height="10" viewBox="0 0 12 10"><path d="M0.6,1.4 Q0.6,0.6 1.4,0.6 h2 l0.8,0.9 h2.6 v5.6 h-6.8 z" fill="#e8e85c" stroke="#2a2a2a" stroke-width="0.8" stroke-linejoin="round"/><path d="M1.2,2.3 h5.6" stroke="#f8f8b0" stroke-width="0.7"/><path d="M0.6,7.2 L1.6,3.6 H7.4" fill="none" stroke="#303020" stroke-width="0.5"/><path d="M3.7,8.7 L10.2,3.8 V8.7 Z" fill="#f06c6c" stroke="#301010" stroke-width="0.45" stroke-linejoin="round"/><path d="M3.7,8.7 L7.4,5.9" stroke="#000" stroke-width="0.9"/></svg><div style="position:absolute;left:60.80px;top:357.20px;height:6.2px;line-height:6.2px;padding:0 0.65px;font-size:5.7px;color:#000;letter-spacing:0.0px;-webkit-text-stroke:0.06px #000;white-space:nowrap;transform:scaleX(0.92);transform-origin:0 0;background:#ffff00;">12: Lastkollektiv 12</div><svg style="position:absolute;left:50.099999999999994px;top:366.4px;overflow:visible" width="12" height="10" viewBox="0 0 12 10"><path d="M0.6,1.4 Q0.6,0.6 1.4,0.6 h2 l0.8,0.9 h2.6 v5.6 h-6.8 z" fill="#e8e85c" stroke="#2a2a2a" stroke-width="0.8" stroke-linejoin="round"/><path d="M1.2,2.3 h5.6" stroke="#f8f8b0" stroke-width="0.7"/><path d="M0.6,7.2 L1.6,3.6 H7.4" fill="none" stroke="#303020" stroke-width="0.5"/><path d="M3.7,8.7 L10.2,3.8 V8.7 Z" fill="#f06c6c" stroke="#301010" stroke-width="0.45" stroke-linejoin="round"/><path d="M3.7,8.7 L7.4,5.9" stroke="#000" stroke-width="0.9"/></svg><div style="position:absolute;left:60.80px;top:367.60px;height:6.2px;line-height:6.2px;padding:0 0.65px;font-size:5.7px;color:#000;letter-spacing:0.0px;-webkit-text-stroke:0.06px #000;white-space:nowrap;transform:scaleX(0.92);transform-origin:0 0;background:#ffff00;">13: Lastkollektiv 13</div><svg style="position:absolute;left:50.099999999999994px;top:376.8px;overflow:visible" width="12" height="10" viewBox="0 0 12 10"><path d="M0.6,1.4 Q0.6,0.6 1.4,0.6 h2 l0.8,0.9 h2.6 v5.6 h-6.8 z" fill="#e8e85c" stroke="#2a2a2a" stroke-width="0.8" stroke-linejoin="round"/><path d="M1.2,2.3 h5.6" stroke="#f8f8b0" stroke-width="0.7"/><path d="M0.6,7.2 L1.6,3.6 H7.4" fill="none" stroke="#303020" stroke-width="0.5"/><path d="M3.7,8.7 L10.2,3.8 V8.7 Z" fill="#f06c6c" stroke="#301010" stroke-width="0.45" stroke-linejoin="round"/><path d="M3.7,8.7 L7.4,5.9" stroke="#000" stroke-width="0.9"/></svg><div style="position:absolute;left:60.80px;top:378.00px;height:6.2px;line-height:6.2px;padding:0 0.65px;font-size:5.7px;color:#000;letter-spacing:0.0px;-webkit-text-stroke:0.06px #000;white-space:nowrap;transform:scaleX(0.92);transform-origin:0 0;background:#ffff00;">14: Lastkollektiv 14</div><svg style="position:absolute;left:50.099999999999994px;top:387.2px;overflow:visible" width="12" height="10" viewBox="0 0 12 10"><path d="M0.6,1.4 Q0.6,0.6 1.4,0.6 h2 l0.8,0.9 h2.6 v5.6 h-6.8 z" fill="#e8e85c" stroke="#2a2a2a" stroke-width="0.8" stroke-linejoin="round"/><path d="M1.2,2.3 h5.6" stroke="#f8f8b0" stroke-width="0.7"/><path d="M0.6,7.2 L1.6,3.6 H7.4" fill="none" stroke="#303020" stroke-width="0.5"/><path d="M3.7,8.7 L10.2,3.8 V8.7 Z" fill="#f06c6c" stroke="#301010" stroke-width="0.45" stroke-linejoin="round"/><path d="M3.7,8.7 L7.4,5.9" stroke="#000" stroke-width="0.9"/></svg><div style="position:absolute;left:60.80px;top:388.40px;height:6.2px;line-height:6.2px;padding:0 0.65px;font-size:5.7px;color:#000;letter-spacing:0.0px;-webkit-text-stroke:0.06px #000;white-space:nowrap;transform:scaleX(0.92);transform-origin:0 0;background:#ffff00;">15: Lastkollektiv 15</div><svg style="position:absolute;left:39.0px;top:397.90000000000003px;overflow:visible" width="8" height="9" viewBox="0 0 8 9"><path d="M0.5,0.5 h4.2 l2,2 v5.9 h-6.2 z" fill="#fbfbfb" stroke="#262626" stroke-width="0.85" stroke-linejoin="round"/><path d="M4.5,0.6 v2.1 h2" fill="none" stroke="#262626" stroke-width="0.6"/></svg><div style="position:absolute;left:47.80px;top:398.80px;height:6.2px;line-height:6.2px;padding:0 0.65px;font-size:5.7px;color:#000;letter-spacing:0.0px;-webkit-text-stroke:0.06px #000;white-space:nowrap;transform:scaleX(0.92);transform-origin:0 0;background:#ffff00;">Zusammenfassung</div><svg style="position:absolute;left:12.8px;top:409.55px;overflow:visible" width="5.5" height="5.5" viewBox="0 0 5.5 5.5"><rect x="0.5" y="0.5" width="4.5" height="4.5" fill="#fcfcfc" stroke="#1a1a1a" stroke-width="1"/><path d="M1.4,2.75 H4.1" stroke="#000" stroke-width="1"/></svg><svg style="position:absolute;left:24px;top:408.3px;overflow:visible" width="10" height="10" viewBox="0 0 10 10"><path d="M1.6,0.6 h4.2 l1.8,1.8 v6 l-1,0.9 h-5 l-0.9,-0.9 v-6.6 z" fill="#eef6e8" stroke="#262626" stroke-width="0.9" stroke-linejoin="round"/><path d="M3.4,5.6 L5.5,7.1 L9.6,3.3" fill="none" stroke="#3ad01a" stroke-width="1.4"/></svg><div style="position:absolute;left:34.60px;top:409.20px;height:6.2px;line-height:6.2px;padding:0 0.65px;font-size:5.7px;color:#000;letter-spacing:0.0px;-webkit-text-stroke:0.06px #000;white-space:nowrap;transform:scaleX(0.92);transform-origin:0 0;background:#ffff00;">5: EC 3 Tragfähigkeit (Th. 1. Ord.)</div><svg style="position:absolute;left:25.6px;top:419.95px;overflow:visible" width="5.5" height="5.5" viewBox="0 0 5.5 5.5"><rect x="0.5" y="0.5" width="4.5" height="4.5" fill="#fcfcfc" stroke="#1a1a1a" stroke-width="1"/><path d="M1.4,2.75 H4.1" stroke="#000" stroke-width="1"/></svg><svg style="position:absolute;left:36.1px;top:418.4px;overflow:visible" width="12" height="10" viewBox="0 0 12 10"><path d="M0.6,1.4 Q0.6,0.6 1.4,0.6 h2 l0.8,0.9 h2.6 v5.6 h-6.8 z" fill="#e8e85c" stroke="#2a2a2a" stroke-width="0.8" stroke-linejoin="round"/><path d="M1.2,2.3 h5.6" stroke="#f8f8b0" stroke-width="0.7"/><path d="M0.6,7.2 L1.6,3.6 H7.4" fill="none" stroke="#303020" stroke-width="0.5"/><path d="M4.2,8.6 L10.6,1.2 V8.6 Z" fill="#5c92ee" stroke="#1a2040" stroke-width="0.45" stroke-linejoin="round"/><path d="M4.2,8.6 L8,4.2" stroke="#000" stroke-width="0.9"/></svg><div style="position:absolute;left:47.80px;top:419.60px;height:6.2px;line-height:6.2px;padding:0 0.65px;font-size:5.7px;color:#000;letter-spacing:0.0px;-webkit-text-stroke:0.06px #000;white-space:nowrap;transform:scaleX(0.92);transform-origin:0 0;background:#ffff00;">Extremierungen</div><svg style="position:absolute;left:49.3px;top:428.8px;overflow:visible" width="12" height="10" viewBox="0 0 12 10"><path d="M0.6,1.4 Q0.6,0.6 1.4,0.6 h2 l0.8,0.9 h2.6 v5.6 h-6.8 z" fill="#e8e85c" stroke="#2a2a2a" stroke-width="0.8" stroke-linejoin="round"/><path d="M1.2,2.3 h5.6" stroke="#f8f8b0" stroke-width="0.7"/><path d="M0.6,7.2 L1.6,3.6 H7.4" fill="none" stroke="#303020" stroke-width="0.5"/><path d="M4.2,8.6 L10.6,1.2 V8.6 Z" fill="#5c92ee" stroke="#1a2040" stroke-width="0.45" stroke-linejoin="round"/><path d="M4.2,8.6 L8,4.2" stroke="#000" stroke-width="0.9"/></svg><div style="position:absolute;left:60.80px;top:430.00px;height:6.2px;line-height:6.2px;padding:0 0.65px;font-size:5.7px;color:#000;letter-spacing:0.0px;-webkit-text-stroke:0.06px #000;white-space:nowrap;transform:scaleX(0.92);transform-origin:0 0;background:#ffff00;">1: Standardkombination</div><svg style="position:absolute;left:39.0px;top:439.5px;overflow:visible" width="8" height="9" viewBox="0 0 8 9"><path d="M0.5,0.5 h4.2 l2,2 v5.9 h-6.2 z" fill="#fbfbfb" stroke="#262626" stroke-width="0.85" stroke-linejoin="round"/><path d="M4.5,0.6 v2.1 h2" fill="none" stroke="#262626" stroke-width="0.6"/></svg><div style="position:absolute;left:47.80px;top:440.40px;height:6.2px;line-height:6.2px;padding:0 0.65px;font-size:5.7px;color:#000;letter-spacing:0.0px;-webkit-text-stroke:0.06px #000;white-space:nowrap;transform:scaleX(0.92);transform-origin:0 0;background:#ffff00;">Zusammenfassung</div><svg style="position:absolute;left:12.8px;top:451.15000000000003px;overflow:visible" width="5.5" height="5.5" viewBox="0 0 5.5 5.5"><rect x="0.5" y="0.5" width="4.5" height="4.5" fill="#fcfcfc" stroke="#1a1a1a" stroke-width="1"/><path d="M1.4,2.75 H4.1" stroke="#000" stroke-width="1"/></svg><svg style="position:absolute;left:24.2px;top:450.90000000000003px;overflow:visible" width="9" height="7" viewBox="0 0 9 7"><path d="M0.6,6 V1 h2.3 l0.8,0.8 h3.1 v1.3" fill="#8a8a70" stroke="#161616" stroke-width="0.9" stroke-linejoin="round"/><path d="M0.6,6.2 l1.7,-3.2 h5.8 l-1.7,3.2 z" fill="#e4e44c" stroke="#161616" stroke-width="0.9" stroke-linejoin="round"/></svg><div style="position:absolute;left:34.60px;top:450.80px;height:6.2px;line-height:6.2px;padding:0 0.65px;font-size:5.7px;color:#000;letter-spacing:0.05px;-webkit-text-stroke:0.06px #000;white-space:nowrap;transform:scaleX(0.92);transform-origin:0 0;background:#ffff00;">VOREINSTELLUNGEN für nicht aufgeführte Ergebnisse</div><svg style="position:absolute;left:36.5px;top:460.0px;overflow:visible" width="11" height="9" viewBox="0 0 11 9"><path d="M0.5,3 Q0.5,2.2 1.3,2.2 h1.6 l0.6,0.7 h1.6 v5.6 h-4.3 z" fill="#e8e866" stroke="#24240c" stroke-width="0.8"/><path d="M4.6,3.2 h4.4 v5.3 h-4.4 z" fill="#5a5a30"/><path d="M0.5,8.6 H9.4" stroke="#1c1c0c" stroke-width="0.9"/><path d="M5.5,0.1 v5.6 M8.5,0.1 v5.6" stroke="#1238f0" stroke-width="1"/><path d="M3.9,5 l1.6,3.6 l1.6,-3.6 z M6.9,5 l1.6,3.6 l1.6,-3.6 z" fill="#1238f0"/></svg><div style="position:absolute;left:47.80px;top:461.20px;height:6.2px;line-height:6.2px;padding:0 0.65px;font-size:5.7px;color:#000;letter-spacing:0.0px;-webkit-text-stroke:0.06px #000;white-space:nowrap;transform:scaleX(0.92);transform-origin:0 0;background:#ffff00;">Lastfall</div></div></div><div style="position:absolute;left:210px;top:81px;width:8px;height:380px;background:linear-gradient(90deg,#e4e4e4 0,#d6d6d6 4px,#7a7a7a 4px,#7a7a7a 5px,#d4d4d4 5px,#d4d4d4 7px,#b0b0b0 7px)"></div><div style="position:absolute;left:210px;top:81px;width:8px;height:325px;background:#e4e4e4;box-shadow:inset 1px 1px 0 #fafafa, inset -1px -1px 0 #8a8a8a"></div><div style="position:absolute;left:210px;top:73px;width:8px;height:8px;background:#e2e2e2;box-shadow:inset 1px 1px 0 #fff, inset -1px -1px 0 #8c8c8c"></div><svg style="position:absolute;left:211.7px;top:75.6px;overflow:visible" width="4.6" height="2.7" viewBox="0 0 4.6 2.7"><path d="M2.3,0 L4.6,2.7 L0,2.7 Z" fill="#000"/></svg><div style="position:absolute;left:210px;top:461px;width:8px;height:8px;background:#e2e2e2;box-shadow:inset 1px 1px 0 #fff, inset -1px -1px 0 #8c8c8c"></div><svg style="position:absolute;left:211.7px;top:463.6px;overflow:visible" width="4.6" height="2.7" viewBox="0 0 4.6 2.7"><path d="M0,0 L4.6,0 L2.3,2.7 Z" fill="#000"/></svg><div style="position:absolute;left:16px;top:469px;width:186px;height:8px;background:linear-gradient(180deg,#e4e4e4 0,#d6d6d6 4px,#7a7a7a 4px,#7a7a7a 5px,#d4d4d4 5px,#d4d4d4 7px,#b0b0b0 7px)"></div><div style="position:absolute;left:16px;top:469px;width:146px;height:8px;background:#e4e4e4;box-shadow:inset 1px 1px 0 #fafafa, inset -1px -1px 0 #8a8a8a"></div><div style="position:absolute;left:8px;top:469px;width:8px;height:8px;background:#e2e2e2;box-shadow:inset 1px 1px 0 #fff, inset -1px -1px 0 #8c8c8c"></div><svg style="position:absolute;left:10.65px;top:470.7px;overflow:visible" width="2.7" height="4.6" viewBox="0 0 2.7 4.6"><path d="M0,2.3 L2.7,0 L2.7,4.6 Z" fill="#000"/></svg><div style="position:absolute;left:202px;top:469px;width:8px;height:8px;background:#e2e2e2;box-shadow:inset 1px 1px 0 #fff, inset -1px -1px 0 #8c8c8c"></div><svg style="position:absolute;left:204.65px;top:470.7px;overflow:visible" width="2.7" height="4.6" viewBox="0 0 2.7 4.6"><path d="M0,0 L2.7,2.3 L0,4.6 Z" fill="#000"/></svg><div style="position:absolute;left:210px;top:469px;width:8px;height:8px;background:#d2d2d2"></div><div style="position:absolute;left:223px;top:70px;width:246px;height:408px;border:1px solid;border-color:#a0a0a0 #dedede #dedede #a0a0a0"></div><div style="position:absolute;left:224px;top:71px;width:244px;height:406px;border:1px solid;border-color:#fafafa #a0a0a0 #a0a0a0 #fafafa"></div><div style="position:absolute;left:225px;top:72px;width:242px;height:404px;border:1px solid;border-color:#6e6e6e #ececec #ececec #6e6e6e"></div><div style="position:absolute;left:226px;top:73px;width:233px;height:396px;overflow:hidden;background:#fffaf0"><div style="position:absolute;left:-226px;top:-73px;width:682px;height:514px"><div style="position:absolute;left:226px;top:147.50px;width:231px;height:10.4px;background:#9ede7e"></div><div style="position:absolute;left:233.70px;top:83.10px;width:1px;height:350.50px;background:#f6d2ac"></div><div style="position:absolute;left:246.80px;top:93.50px;width:1px;height:38.50px;background:#f6d2ac"></div><div style="position:absolute;left:234.20px;top:89.80px;width:9.80px;height:1px;background:#f6d2ac"></div><div style="position:absolute;left:247.30px;top:100.20px;width:9.30px;height:1px;background:#f6d2ac"></div><div style="position:absolute;left:247.30px;top:110.60px;width:9.30px;height:1px;background:#f6d2ac"></div><div style="position:absolute;left:247.30px;top:121.00px;width:9.30px;height:1px;background:#f6d2ac"></div><div style="position:absolute;left:247.30px;top:131.40px;width:9.30px;height:1px;background:#f6d2ac"></div><div style="position:absolute;left:246.80px;top:145.50px;width:1px;height:204.90px;background:#f6d2ac"></div><div style="position:absolute;left:234.20px;top:141.80px;width:9.80px;height:1px;background:#f6d2ac"></div><div style="position:absolute;left:247.30px;top:152.20px;width:9.30px;height:1px;background:#f6d2ac"></div><div style="position:absolute;left:247.30px;top:162.60px;width:9.30px;height:1px;background:#f6d2ac"></div><div style="position:absolute;left:247.30px;top:173.00px;width:9.30px;height:1px;background:#f6d2ac"></div><div style="position:absolute;left:247.30px;top:183.40px;width:9.30px;height:1px;background:#f6d2ac"></div><div style="position:absolute;left:247.30px;top:193.80px;width:9.30px;height:1px;background:#f6d2ac"></div><div style="position:absolute;left:247.30px;top:204.20px;width:9.30px;height:1px;background:#f6d2ac"></div><div style="position:absolute;left:247.30px;top:214.60px;width:9.30px;height:1px;background:#f6d2ac"></div><div style="position:absolute;left:247.30px;top:225.00px;width:9.30px;height:1px;background:#f6d2ac"></div><div style="position:absolute;left:247.30px;top:235.40px;width:9.30px;height:1px;background:#f6d2ac"></div><div style="position:absolute;left:247.30px;top:245.80px;width:9.30px;height:1px;background:#f6d2ac"></div><div style="position:absolute;left:247.30px;top:256.20px;width:9.30px;height:1px;background:#f6d2ac"></div><div style="position:absolute;left:247.30px;top:266.60px;width:9.30px;height:1px;background:#f6d2ac"></div><div style="position:absolute;left:247.30px;top:277.00px;width:9.30px;height:1px;background:#f6d2ac"></div><div style="position:absolute;left:247.30px;top:287.40px;width:9.30px;height:1px;background:#f6d2ac"></div><div style="position:absolute;left:247.30px;top:297.80px;width:9.30px;height:1px;background:#f6d2ac"></div><div style="position:absolute;left:247.30px;top:308.20px;width:9.30px;height:1px;background:#f6d2ac"></div><div style="position:absolute;left:247.30px;top:318.60px;width:9.30px;height:1px;background:#f6d2ac"></div><div style="position:absolute;left:247.30px;top:329.00px;width:9.30px;height:1px;background:#f6d2ac"></div><div style="position:absolute;left:247.30px;top:339.40px;width:9.30px;height:1px;background:#f6d2ac"></div><div style="position:absolute;left:247.30px;top:349.80px;width:9.30px;height:1px;background:#f6d2ac"></div><div style="position:absolute;left:246.80px;top:363.90px;width:1px;height:59.30px;background:#f6d2ac"></div><div style="position:absolute;left:234.20px;top:360.20px;width:9.80px;height:1px;background:#f6d2ac"></div><div style="position:absolute;left:247.30px;top:370.60px;width:9.30px;height:1px;background:#f6d2ac"></div><div style="position:absolute;left:247.30px;top:381.00px;width:9.30px;height:1px;background:#f6d2ac"></div><div style="position:absolute;left:247.30px;top:391.40px;width:9.30px;height:1px;background:#f6d2ac"></div><div style="position:absolute;left:247.30px;top:401.80px;width:9.30px;height:1px;background:#f6d2ac"></div><div style="position:absolute;left:247.30px;top:412.20px;width:9.30px;height:1px;background:#f6d2ac"></div><div style="position:absolute;left:247.30px;top:422.60px;width:9.30px;height:1px;background:#f6d2ac"></div><div style="position:absolute;left:246.80px;top:436.70px;width:1px;height:17.70px;background:#f6d2ac"></div><div style="position:absolute;left:234.20px;top:433.00px;width:9.80px;height:1px;background:#f6d2ac"></div><div style="position:absolute;left:247.30px;top:443.40px;width:9.30px;height:1px;background:#f6d2ac"></div><div style="position:absolute;left:247.30px;top:453.80px;width:9.30px;height:1px;background:#f6d2ac"></div><svg style="position:absolute;left:228.4px;top:75.2px;overflow:visible" width="12" height="10" viewBox="0 0 12 10"><path d="M0.6,1.4 Q0.6,0.6 1.4,0.6 h2 l0.8,0.9 h2.6 v5.6 h-6.8 z" fill="#e8e85c" stroke="#2a2a2a" stroke-width="0.8" stroke-linejoin="round"/><path d="M1.2,2.3 h5.6" stroke="#f8f8b0" stroke-width="0.7"/><path d="M0.6,7.2 L1.6,3.6 H7.4" fill="none" stroke="#303020" stroke-width="0.5"/><path d="M4.2,8.6 L10.6,1.2 V8.6 Z" fill="#5c92ee" stroke="#1a2040" stroke-width="0.45" stroke-linejoin="round"/><path d="M4.2,8.6 L8,4.2" stroke="#000" stroke-width="0.9"/></svg><div style="position:absolute;left:240.00px;top:76.40px;height:6.2px;line-height:6.2px;padding:0 0.65px;font-size:5.7px;color:#222;letter-spacing:0.0px;-webkit-text-stroke:0.05px #222;white-space:nowrap;transform:scaleX(0.92);transform-origin:0 0;">Extremierung 1: Standardkombination (EC 3 Tragfähigkeit (Th. 1. Ord.))</div><svg style="position:absolute;left:231.0px;top:87.15px;overflow:visible" width="5.5" height="5.5" viewBox="0 0 5.5 5.5"><rect x="0.5" y="0.5" width="4.5" height="4.5" fill="#fcfcfc" stroke="#1a1a1a" stroke-width="1"/><path d="M1.4,2.75 H4.1" stroke="#000" stroke-width="1"/></svg><svg style="position:absolute;left:243.2px;top:86.9px;overflow:visible" width="9" height="7" viewBox="0 0 9 7"><path d="M0.6,6 V1 h2.3 l0.8,0.8 h3.1 v1.3" fill="#8a8a70" stroke="#161616" stroke-width="0.9" stroke-linejoin="round"/><path d="M0.6,6.2 l1.7,-3.2 h5.8 l-1.7,3.2 z" fill="#e4e44c" stroke="#161616" stroke-width="0.9" stroke-linejoin="round"/></svg><div style="position:absolute;left:252.60px;top:86.80px;height:6.2px;line-height:6.2px;padding:0 0.65px;font-size:5.7px;color:#222;letter-spacing:0.0px;-webkit-text-stroke:0.05px #222;white-space:nowrap;transform:scaleX(0.92);transform-origin:0 0;">Bauteil</div><svg style="position:absolute;left:255.6px;top:97.3px;overflow:visible" width="9" height="9" viewBox="0 0 9 9"><path d="M0.9,0.5 h2.6 l1.2,1.2 v5.2 h-3.8 z" fill="#66664e" stroke="#262620" stroke-width="0.55"/><path d="M1.8,1.2 v5 M2.8,1.6 v4.6" stroke="#a8a890" stroke-width="0.4"/><path d="M3.6,1.4 h2.8 l1.6,1.6 v5 h-4.4 z" fill="#8a8e7c" stroke="#1e1e1e" stroke-width="0.6"/><path d="M6.4,1.4 v1.6 h1.6 z" fill="#111"/><path d="M4.6,4.4 h2.6 M4.6,6 h2.6 M5.8,3.2 v4.4" stroke="#c8d0c0" stroke-width="0.4"/><circle cx="6.6" cy="6.4" r="0.6" fill="#eef4e8"/></svg><div style="position:absolute;left:265.40px;top:97.20px;height:6.2px;line-height:6.2px;padding:0 0.65px;font-size:5.7px;color:#222;letter-spacing:0.0px;-webkit-text-stroke:0.05px #222;white-space:nowrap;transform:scaleX(0.92);transform-origin:0 0;">extr. Verformungen der Stäbe</div><svg style="position:absolute;left:255.6px;top:107.7px;overflow:visible" width="9" height="9" viewBox="0 0 9 9"><path d="M0.9,0.5 h2.6 l1.2,1.2 v5.2 h-3.8 z" fill="#66664e" stroke="#262620" stroke-width="0.55"/><path d="M1.8,1.2 v5 M2.8,1.6 v4.6" stroke="#a8a890" stroke-width="0.4"/><path d="M3.6,1.4 h2.8 l1.6,1.6 v5 h-4.4 z" fill="#8a8e7c" stroke="#1e1e1e" stroke-width="0.6"/><path d="M6.4,1.4 v1.6 h1.6 z" fill="#111"/><path d="M4.6,4.4 h2.6 M4.6,6 h2.6 M5.8,3.2 v4.4" stroke="#c8d0c0" stroke-width="0.4"/><circle cx="6.6" cy="6.4" r="0.6" fill="#eef4e8"/></svg><div style="position:absolute;left:265.40px;top:107.60px;height:6.2px;line-height:6.2px;padding:0 0.65px;font-size:5.7px;color:#222;letter-spacing:0.0px;-webkit-text-stroke:0.05px #222;white-space:nowrap;transform:scaleX(0.92);transform-origin:0 0;">extr. Schnittgrößen der Stäbe</div><svg style="position:absolute;left:255.6px;top:118.1px;overflow:visible" width="9" height="9" viewBox="0 0 9 9"><path d="M0.9,0.5 h2.6 l1.2,1.2 v5.2 h-3.8 z" fill="#66664e" stroke="#262620" stroke-width="0.55"/><path d="M1.8,1.2 v5 M2.8,1.6 v4.6" stroke="#a8a890" stroke-width="0.4"/><path d="M3.6,1.4 h2.8 l1.6,1.6 v5 h-4.4 z" fill="#8a8e7c" stroke="#1e1e1e" stroke-width="0.6"/><path d="M6.4,1.4 v1.6 h1.6 z" fill="#111"/><path d="M4.6,4.4 h2.6 M4.6,6 h2.6 M5.8,3.2 v4.4" stroke="#c8d0c0" stroke-width="0.4"/><circle cx="6.6" cy="6.4" r="0.6" fill="#eef4e8"/></svg><div style="position:absolute;left:265.40px;top:118.00px;height:6.2px;line-height:6.2px;padding:0 0.65px;font-size:5.7px;color:#222;letter-spacing:0.0px;-webkit-text-stroke:0.05px #222;white-space:nowrap;transform:scaleX(0.92);transform-origin:0 0;">extr. Bettungen der Stäbe</div><svg style="position:absolute;left:255.6px;top:128.5px;overflow:visible" width="9" height="9" viewBox="0 0 9 9"><path d="M0.9,0.5 h2.6 l1.2,1.2 v5.2 h-3.8 z" fill="#66664e" stroke="#262620" stroke-width="0.55"/><path d="M1.8,1.2 v5 M2.8,1.6 v4.6" stroke="#a8a890" stroke-width="0.4"/><path d="M3.6,1.4 h2.8 l1.6,1.6 v5 h-4.4 z" fill="#8a8e7c" stroke="#1e1e1e" stroke-width="0.6"/><path d="M6.4,1.4 v1.6 h1.6 z" fill="#111"/><path d="M4.6,4.4 h2.6 M4.6,6 h2.6 M5.8,3.2 v4.4" stroke="#c8d0c0" stroke-width="0.4"/><circle cx="6.6" cy="6.4" r="0.6" fill="#eef4e8"/></svg><div style="position:absolute;left:265.40px;top:128.40px;height:6.2px;line-height:6.2px;padding:0 0.65px;font-size:5.7px;color:#222;letter-spacing:0.0px;-webkit-text-stroke:0.05px #222;white-space:nowrap;transform:scaleX(0.92);transform-origin:0 0;">EC3: max. Ausnutzung der Stäbe</div><svg style="position:absolute;left:231.0px;top:139.15px;overflow:visible" width="5.5" height="5.5" viewBox="0 0 5.5 5.5"><rect x="0.5" y="0.5" width="4.5" height="4.5" fill="#fcfcfc" stroke="#1a1a1a" stroke-width="1"/><path d="M1.4,2.75 H4.1" stroke="#000" stroke-width="1"/></svg><svg style="position:absolute;left:242.8px;top:139.70000000000002px;overflow:visible" width="10" height="7" viewBox="0 0 10 7"><path d="M3.9,4.3 L9.6,1 L9.3,2.5 L4,5.6 Z" fill="#3a3a3a"/><path d="M1.2,4.5 L4.2,4.8 L3.8,6.5 L1.1,6.2 Z" fill="#2a2a2a"/><path d="M0.7,3.7 L6.6,0.4 L9.6,0.9 L3.9,4.3 Z" fill="#9c9c8c" stroke="#1a1a1a" stroke-width="0.7" stroke-linejoin="round"/><path d="M2.4,3.3 L7.6,0.95" stroke="#e6e6d8" stroke-width="0.7"/></svg><div style="position:absolute;left:252.60px;top:138.80px;height:6.2px;line-height:6.2px;padding:0 0.65px;font-size:5.7px;color:#222;letter-spacing:0.0px;-webkit-text-stroke:0.05px #222;white-space:nowrap;transform:scaleX(0.92);transform-origin:0 0;box-shadow:inset 0 0 0 0.8px #f2ee60;">Stäbe</div><svg style="position:absolute;left:255.6px;top:148.70000000000002px;overflow:visible" width="10" height="8" viewBox="0 0 10 8"><path d="M1.4,6.2 C1.6,3.6 2.6,2.4 3.8,2.4 C5.2,2.4 6.6,4.4 7.6,6.2 Z" fill="#3d72ea" stroke="#1a3080" stroke-width="0.4"/><path d="M2.6,4 C3,3.3 3.8,3.1 4.4,3.5" fill="none" stroke="#9cc0ff" stroke-width="0.6"/><path d="M1,0.2 V7.6 M0.2,6.6 H9.4" fill="none" stroke="#101010" stroke-width="0.8"/><path d="M0.3,1 h1.4" stroke="#101010" stroke-width="0.5"/></svg><div style="position:absolute;left:265.40px;top:149.20px;height:6.2px;line-height:6.2px;padding:0 0.65px;font-size:5.7px;color:#000;letter-spacing:0.0px;-webkit-text-stroke:0.06px #000;white-space:nowrap;transform:scaleX(0.92);transform-origin:0 0;background:#ffff00;">Stabergebnisse</div><svg style="position:absolute;left:255.6px;top:159.1px;overflow:visible" width="10" height="8" viewBox="0 0 10 8"><path d="M1.4,6.2 C1.6,3.6 2.6,2.4 3.8,2.4 C5.2,2.4 6.6,4.4 7.6,6.2 Z" fill="#3d72ea" stroke="#1a3080" stroke-width="0.4"/><path d="M2.6,4 C3,3.3 3.8,3.1 4.4,3.5" fill="none" stroke="#9cc0ff" stroke-width="0.6"/><path d="M1,0.2 V7.6 M0.2,6.6 H9.4" fill="none" stroke="#101010" stroke-width="0.8"/><path d="M0.3,1 h1.4" stroke="#101010" stroke-width="0.5"/></svg><div style="position:absolute;left:265.40px;top:159.60px;height:6.2px;line-height:6.2px;padding:0 0.65px;font-size:5.7px;color:#222;letter-spacing:0.0px;-webkit-text-stroke:0.05px #222;white-space:nowrap;transform:scaleX(0.92);transform-origin:0 0;">Durchbiegung</div><svg style="position:absolute;left:255.6px;top:170.10000000000002px;overflow:visible" width="9" height="9" viewBox="0 0 9 9"><path d="M0.9,0.5 h2.6 l1.2,1.2 v5.2 h-3.8 z" fill="#66664e" stroke="#262620" stroke-width="0.55"/><path d="M1.8,1.2 v5 M2.8,1.6 v4.6" stroke="#a8a890" stroke-width="0.4"/><path d="M3.6,1.4 h2.8 l1.6,1.6 v5 h-4.4 z" fill="#8a8e7c" stroke="#1e1e1e" stroke-width="0.6"/><path d="M6.4,1.4 v1.6 h1.6 z" fill="#111"/><path d="M4.6,4.4 h2.6 M4.6,6 h2.6 M5.8,3.2 v4.4" stroke="#c8d0c0" stroke-width="0.4"/><circle cx="6.6" cy="6.4" r="0.6" fill="#eef4e8"/></svg><div style="position:absolute;left:265.40px;top:170.00px;height:6.2px;line-height:6.2px;padding:0 0.65px;font-size:5.7px;color:#222;letter-spacing:0.0px;-webkit-text-stroke:0.05px #222;white-space:nowrap;transform:scaleX(0.92);transform-origin:0 0;">Verformungen</div><svg style="position:absolute;left:255.6px;top:180.5px;overflow:visible" width="9" height="9" viewBox="0 0 9 9"><path d="M0.9,0.5 h2.6 l1.2,1.2 v5.2 h-3.8 z" fill="#66664e" stroke="#262620" stroke-width="0.55"/><path d="M1.8,1.2 v5 M2.8,1.6 v4.6" stroke="#a8a890" stroke-width="0.4"/><path d="M3.6,1.4 h2.8 l1.6,1.6 v5 h-4.4 z" fill="#8a8e7c" stroke="#1e1e1e" stroke-width="0.6"/><path d="M6.4,1.4 v1.6 h1.6 z" fill="#111"/><path d="M4.6,4.4 h2.6 M4.6,6 h2.6 M5.8,3.2 v4.4" stroke="#c8d0c0" stroke-width="0.4"/><circle cx="6.6" cy="6.4" r="0.6" fill="#eef4e8"/></svg><div style="position:absolute;left:265.40px;top:180.40px;height:6.2px;line-height:6.2px;padding:0 0.65px;font-size:5.7px;color:#222;letter-spacing:0.0px;-webkit-text-stroke:0.05px #222;white-space:nowrap;transform:scaleX(0.92);transform-origin:0 0;">Durchbiegung</div><svg style="position:absolute;left:255.6px;top:190.3px;overflow:visible" width="10" height="8" viewBox="0 0 10 8"><path d="M1.4,6.2 C1.6,3.6 2.6,2.4 3.8,2.4 C5.2,2.4 6.6,4.4 7.6,6.2 Z" fill="#3d72ea" stroke="#1a3080" stroke-width="0.4"/><path d="M2.6,4 C3,3.3 3.8,3.1 4.4,3.5" fill="none" stroke="#9cc0ff" stroke-width="0.6"/><path d="M1,0.2 V7.6 M0.2,6.6 H9.4" fill="none" stroke="#101010" stroke-width="0.8"/><path d="M0.3,1 h1.4" stroke="#101010" stroke-width="0.5"/></svg><div style="position:absolute;left:265.40px;top:190.80px;height:6.2px;line-height:6.2px;padding:0 0.65px;font-size:5.7px;color:#222;letter-spacing:0.0px;-webkit-text-stroke:0.05px #222;white-space:nowrap;transform:scaleX(0.92);transform-origin:0 0;">Schnittgrößen</div><svg style="position:absolute;left:255.6px;top:201.3px;overflow:visible" width="9" height="9" viewBox="0 0 9 9"><path d="M0.9,0.5 h2.6 l1.2,1.2 v5.2 h-3.8 z" fill="#66664e" stroke="#262620" stroke-width="0.55"/><path d="M1.8,1.2 v5 M2.8,1.6 v4.6" stroke="#a8a890" stroke-width="0.4"/><path d="M3.6,1.4 h2.8 l1.6,1.6 v5 h-4.4 z" fill="#8a8e7c" stroke="#1e1e1e" stroke-width="0.6"/><path d="M6.4,1.4 v1.6 h1.6 z" fill="#111"/><path d="M4.6,4.4 h2.6 M4.6,6 h2.6 M5.8,3.2 v4.4" stroke="#c8d0c0" stroke-width="0.4"/><circle cx="6.6" cy="6.4" r="0.6" fill="#eef4e8"/></svg><div style="position:absolute;left:265.40px;top:201.20px;height:6.2px;line-height:6.2px;padding:0 0.65px;font-size:5.7px;color:#000;letter-spacing:0.0px;-webkit-text-stroke:0.06px #000;white-space:nowrap;transform:scaleX(0.92);transform-origin:0 0;background:#ffff00;">Schnittgrößen</div><svg style="position:absolute;left:255.6px;top:211.10000000000002px;overflow:visible" width="10" height="8" viewBox="0 0 10 8"><path d="M1.4,6.2 C1.6,3.6 2.6,2.4 3.8,2.4 C5.2,2.4 6.6,4.4 7.6,6.2 Z" fill="#3d72ea" stroke="#1a3080" stroke-width="0.4"/><path d="M2.6,4 C3,3.3 3.8,3.1 4.4,3.5" fill="none" stroke="#9cc0ff" stroke-width="0.6"/><path d="M1,0.2 V7.6 M0.2,6.6 H9.4" fill="none" stroke="#101010" stroke-width="0.8"/><path d="M0.3,1 h1.4" stroke="#101010" stroke-width="0.5"/></svg><div style="position:absolute;left:265.40px;top:211.60px;height:6.2px;line-height:6.2px;padding:0 0.65px;font-size:5.7px;color:#222;letter-spacing:0.0px;-webkit-text-stroke:0.05px #222;white-space:nowrap;transform:scaleX(0.92);transform-origin:0 0;">Schnittkräfte</div><svg style="position:absolute;left:255.6px;top:222.1px;overflow:visible" width="9" height="9" viewBox="0 0 9 9"><path d="M0.9,0.5 h2.6 l1.2,1.2 v5.2 h-3.8 z" fill="#66664e" stroke="#262620" stroke-width="0.55"/><path d="M1.8,1.2 v5 M2.8,1.6 v4.6" stroke="#a8a890" stroke-width="0.4"/><path d="M3.6,1.4 h2.8 l1.6,1.6 v5 h-4.4 z" fill="#8a8e7c" stroke="#1e1e1e" stroke-width="0.6"/><path d="M6.4,1.4 v1.6 h1.6 z" fill="#111"/><path d="M4.6,4.4 h2.6 M4.6,6 h2.6 M5.8,3.2 v4.4" stroke="#c8d0c0" stroke-width="0.4"/><circle cx="6.6" cy="6.4" r="0.6" fill="#eef4e8"/></svg><div style="position:absolute;left:265.40px;top:222.00px;height:6.2px;line-height:6.2px;padding:0 0.65px;font-size:5.7px;color:#222;letter-spacing:0.0px;-webkit-text-stroke:0.05px #222;white-space:nowrap;transform:scaleX(0.92);transform-origin:0 0;">Schnittkräfte</div><svg style="position:absolute;left:255.6px;top:231.9px;overflow:visible" width="10" height="8" viewBox="0 0 10 8"><path d="M1.4,6.2 C1.6,3.6 2.6,2.4 3.8,2.4 C5.2,2.4 6.6,4.4 7.6,6.2 Z" fill="#3d72ea" stroke="#1a3080" stroke-width="0.4"/><path d="M2.6,4 C3,3.3 3.8,3.1 4.4,3.5" fill="none" stroke="#9cc0ff" stroke-width="0.6"/><path d="M1,0.2 V7.6 M0.2,6.6 H9.4" fill="none" stroke="#101010" stroke-width="0.8"/><path d="M0.3,1 h1.4" stroke="#101010" stroke-width="0.5"/></svg><div style="position:absolute;left:265.40px;top:232.40px;height:6.2px;line-height:6.2px;padding:0 0.65px;font-size:5.7px;color:#222;letter-spacing:0.0px;-webkit-text-stroke:0.05px #222;white-space:nowrap;transform:scaleX(0.92);transform-origin:0 0;">Momente</div><svg style="position:absolute;left:255.6px;top:242.9px;overflow:visible" width="9" height="9" viewBox="0 0 9 9"><path d="M0.9,0.5 h2.6 l1.2,1.2 v5.2 h-3.8 z" fill="#66664e" stroke="#262620" stroke-width="0.55"/><path d="M1.8,1.2 v5 M2.8,1.6 v4.6" stroke="#a8a890" stroke-width="0.4"/><path d="M3.6,1.4 h2.8 l1.6,1.6 v5 h-4.4 z" fill="#8a8e7c" stroke="#1e1e1e" stroke-width="0.6"/><path d="M6.4,1.4 v1.6 h1.6 z" fill="#111"/><path d="M4.6,4.4 h2.6 M4.6,6 h2.6 M5.8,3.2 v4.4" stroke="#c8d0c0" stroke-width="0.4"/><circle cx="6.6" cy="6.4" r="0.6" fill="#eef4e8"/></svg><div style="position:absolute;left:265.40px;top:242.80px;height:6.2px;line-height:6.2px;padding:0 0.65px;font-size:5.7px;color:#222;letter-spacing:0.0px;-webkit-text-stroke:0.05px #222;white-space:nowrap;transform:scaleX(0.92);transform-origin:0 0;">Momente</div><svg style="position:absolute;left:255.6px;top:252.70000000000002px;overflow:visible" width="10" height="8" viewBox="0 0 10 8"><path d="M1.4,6.2 C1.6,3.6 2.6,2.4 3.8,2.4 C5.2,2.4 6.6,4.4 7.6,6.2 Z" fill="#3d72ea" stroke="#1a3080" stroke-width="0.4"/><path d="M2.6,4 C3,3.3 3.8,3.1 4.4,3.5" fill="none" stroke="#9cc0ff" stroke-width="0.6"/><path d="M1,0.2 V7.6 M0.2,6.6 H9.4" fill="none" stroke="#101010" stroke-width="0.8"/><path d="M0.3,1 h1.4" stroke="#101010" stroke-width="0.5"/></svg><div style="position:absolute;left:265.40px;top:253.20px;height:6.2px;line-height:6.2px;padding:0 0.65px;font-size:5.7px;color:#222;letter-spacing:0.0px;-webkit-text-stroke:0.05px #222;white-space:nowrap;transform:scaleX(0.92);transform-origin:0 0;">Stabbettungen</div><svg style="position:absolute;left:255.6px;top:263.70000000000005px;overflow:visible" width="9" height="9" viewBox="0 0 9 9"><path d="M0.9,0.5 h2.6 l1.2,1.2 v5.2 h-3.8 z" fill="#66664e" stroke="#262620" stroke-width="0.55"/><path d="M1.8,1.2 v5 M2.8,1.6 v4.6" stroke="#a8a890" stroke-width="0.4"/><path d="M3.6,1.4 h2.8 l1.6,1.6 v5 h-4.4 z" fill="#8a8e7c" stroke="#1e1e1e" stroke-width="0.6"/><path d="M6.4,1.4 v1.6 h1.6 z" fill="#111"/><path d="M4.6,4.4 h2.6 M4.6,6 h2.6 M5.8,3.2 v4.4" stroke="#c8d0c0" stroke-width="0.4"/><circle cx="6.6" cy="6.4" r="0.6" fill="#eef4e8"/></svg><div style="position:absolute;left:265.40px;top:263.60px;height:6.2px;line-height:6.2px;padding:0 0.65px;font-size:5.7px;color:#222;letter-spacing:0.0px;-webkit-text-stroke:0.05px #222;white-space:nowrap;transform:scaleX(0.92);transform-origin:0 0;">Stabbettungen</div><svg style="position:absolute;left:255.6px;top:273.5px;overflow:visible" width="10" height="8" viewBox="0 0 10 8"><path d="M1.4,6.2 C1.6,3.6 2.6,2.4 3.8,2.4 C5.2,2.4 6.6,4.4 7.6,6.2 Z" fill="#3d72ea" stroke="#1a3080" stroke-width="0.4"/><path d="M2.6,4 C3,3.3 3.8,3.1 4.4,3.5" fill="none" stroke="#9cc0ff" stroke-width="0.6"/><path d="M1,0.2 V7.6 M0.2,6.6 H9.4" fill="none" stroke="#101010" stroke-width="0.8"/><path d="M0.3,1 h1.4" stroke="#101010" stroke-width="0.5"/></svg><div style="position:absolute;left:265.40px;top:274.00px;height:6.2px;line-height:6.2px;padding:0 0.65px;font-size:5.7px;color:#222;letter-spacing:0.0px;-webkit-text-stroke:0.05px #222;white-space:nowrap;transform:scaleX(0.92);transform-origin:0 0;">EC3: Nachweisergebnisse</div><svg style="position:absolute;left:255.6px;top:284.5px;overflow:visible" width="9" height="9" viewBox="0 0 9 9"><path d="M0.9,0.5 h2.6 l1.2,1.2 v5.2 h-3.8 z" fill="#66664e" stroke="#262620" stroke-width="0.55"/><path d="M1.8,1.2 v5 M2.8,1.6 v4.6" stroke="#a8a890" stroke-width="0.4"/><path d="M3.6,1.4 h2.8 l1.6,1.6 v5 h-4.4 z" fill="#8a8e7c" stroke="#1e1e1e" stroke-width="0.6"/><path d="M6.4,1.4 v1.6 h1.6 z" fill="#111"/><path d="M4.6,4.4 h2.6 M4.6,6 h2.6 M5.8,3.2 v4.4" stroke="#c8d0c0" stroke-width="0.4"/><circle cx="6.6" cy="6.4" r="0.6" fill="#eef4e8"/></svg><div style="position:absolute;left:265.40px;top:284.40px;height:6.2px;line-height:6.2px;padding:0 0.65px;font-size:5.7px;color:#222;letter-spacing:0.0px;-webkit-text-stroke:0.05px #222;white-space:nowrap;transform:scaleX(0.92);transform-origin:0 0;">EC3: Nachweisergebnisse</div><svg style="position:absolute;left:255.6px;top:294.29999999999995px;overflow:visible" width="10" height="8" viewBox="0 0 10 8"><path d="M1.4,6.2 C1.6,3.6 2.6,2.4 3.8,2.4 C5.2,2.4 6.6,4.4 7.6,6.2 Z" fill="#3d72ea" stroke="#1a3080" stroke-width="0.4"/><path d="M2.6,4 C3,3.3 3.8,3.1 4.4,3.5" fill="none" stroke="#9cc0ff" stroke-width="0.6"/><path d="M1,0.2 V7.6 M0.2,6.6 H9.4" fill="none" stroke="#101010" stroke-width="0.8"/><path d="M0.3,1 h1.4" stroke="#101010" stroke-width="0.5"/></svg><div style="position:absolute;left:265.40px;top:294.80px;height:6.2px;line-height:6.2px;padding:0 0.65px;font-size:5.7px;color:#222;letter-spacing:0.0px;-webkit-text-stroke:0.05px #222;white-space:nowrap;transform:scaleX(0.92);transform-origin:0 0;">EC3: Spannungen</div><svg style="position:absolute;left:255.6px;top:305.3px;overflow:visible" width="9" height="9" viewBox="0 0 9 9"><path d="M0.9,0.5 h2.6 l1.2,1.2 v5.2 h-3.8 z" fill="#66664e" stroke="#262620" stroke-width="0.55"/><path d="M1.8,1.2 v5 M2.8,1.6 v4.6" stroke="#a8a890" stroke-width="0.4"/><path d="M3.6,1.4 h2.8 l1.6,1.6 v5 h-4.4 z" fill="#8a8e7c" stroke="#1e1e1e" stroke-width="0.6"/><path d="M6.4,1.4 v1.6 h1.6 z" fill="#111"/><path d="M4.6,4.4 h2.6 M4.6,6 h2.6 M5.8,3.2 v4.4" stroke="#c8d0c0" stroke-width="0.4"/><circle cx="6.6" cy="6.4" r="0.6" fill="#eef4e8"/></svg><div style="position:absolute;left:265.40px;top:305.20px;height:6.2px;line-height:6.2px;padding:0 0.65px;font-size:5.7px;color:#222;letter-spacing:0.0px;-webkit-text-stroke:0.05px #222;white-space:nowrap;transform:scaleX(0.92);transform-origin:0 0;">EC3: Spannungen</div><svg style="position:absolute;left:255.6px;top:315.1px;overflow:visible" width="10" height="8" viewBox="0 0 10 8"><path d="M1.4,6.2 C1.6,3.6 2.6,2.4 3.8,2.4 C5.2,2.4 6.6,4.4 7.6,6.2 Z" fill="#3d72ea" stroke="#1a3080" stroke-width="0.4"/><path d="M2.6,4 C3,3.3 3.8,3.1 4.4,3.5" fill="none" stroke="#9cc0ff" stroke-width="0.6"/><path d="M1,0.2 V7.6 M0.2,6.6 H9.4" fill="none" stroke="#101010" stroke-width="0.8"/><path d="M0.3,1 h1.4" stroke="#101010" stroke-width="0.5"/></svg><div style="position:absolute;left:265.40px;top:315.60px;height:6.2px;line-height:6.2px;padding:0 0.65px;font-size:5.7px;color:#222;letter-spacing:0.0px;-webkit-text-stroke:0.05px #222;white-space:nowrap;transform:scaleX(0.92);transform-origin:0 0;">EC3: Ausnutzungen</div><svg style="position:absolute;left:255.6px;top:326.1px;overflow:visible" width="9" height="9" viewBox="0 0 9 9"><path d="M0.9,0.5 h2.6 l1.2,1.2 v5.2 h-3.8 z" fill="#66664e" stroke="#262620" stroke-width="0.55"/><path d="M1.8,1.2 v5 M2.8,1.6 v4.6" stroke="#a8a890" stroke-width="0.4"/><path d="M3.6,1.4 h2.8 l1.6,1.6 v5 h-4.4 z" fill="#8a8e7c" stroke="#1e1e1e" stroke-width="0.6"/><path d="M6.4,1.4 v1.6 h1.6 z" fill="#111"/><path d="M4.6,4.4 h2.6 M4.6,6 h2.6 M5.8,3.2 v4.4" stroke="#c8d0c0" stroke-width="0.4"/><circle cx="6.6" cy="6.4" r="0.6" fill="#eef4e8"/></svg><div style="position:absolute;left:265.40px;top:326.00px;height:6.2px;line-height:6.2px;padding:0 0.65px;font-size:5.7px;color:#222;letter-spacing:0.0px;-webkit-text-stroke:0.05px #222;white-space:nowrap;transform:scaleX(0.92);transform-origin:0 0;">EC3: Ausnutzungen</div><svg style="position:absolute;left:255.6px;top:335.9px;overflow:visible" width="10" height="8" viewBox="0 0 10 8"><path d="M1.4,6.2 C1.6,3.6 2.6,2.4 3.8,2.4 C5.2,2.4 6.6,4.4 7.6,6.2 Z" fill="#3d72ea" stroke="#1a3080" stroke-width="0.4"/><path d="M2.6,4 C3,3.3 3.8,3.1 4.4,3.5" fill="none" stroke="#9cc0ff" stroke-width="0.6"/><path d="M1,0.2 V7.6 M0.2,6.6 H9.4" fill="none" stroke="#101010" stroke-width="0.8"/><path d="M0.3,1 h1.4" stroke="#101010" stroke-width="0.5"/></svg><div style="position:absolute;left:265.40px;top:336.40px;height:6.2px;line-height:6.2px;padding:0 0.65px;font-size:5.7px;color:#222;letter-spacing:0.0px;-webkit-text-stroke:0.05px #222;white-space:nowrap;transform:scaleX(0.92);transform-origin:0 0;">EC3: max. Ausnutzung</div><svg style="position:absolute;left:255.6px;top:346.90000000000003px;overflow:visible" width="9" height="9" viewBox="0 0 9 9"><path d="M0.9,0.5 h2.6 l1.2,1.2 v5.2 h-3.8 z" fill="#66664e" stroke="#262620" stroke-width="0.55"/><path d="M1.8,1.2 v5 M2.8,1.6 v4.6" stroke="#a8a890" stroke-width="0.4"/><path d="M3.6,1.4 h2.8 l1.6,1.6 v5 h-4.4 z" fill="#8a8e7c" stroke="#1e1e1e" stroke-width="0.6"/><path d="M6.4,1.4 v1.6 h1.6 z" fill="#111"/><path d="M4.6,4.4 h2.6 M4.6,6 h2.6 M5.8,3.2 v4.4" stroke="#c8d0c0" stroke-width="0.4"/><circle cx="6.6" cy="6.4" r="0.6" fill="#eef4e8"/></svg><div style="position:absolute;left:265.40px;top:346.80px;height:6.2px;line-height:6.2px;padding:0 0.65px;font-size:5.7px;color:#222;letter-spacing:0.0px;-webkit-text-stroke:0.05px #222;white-space:nowrap;transform:scaleX(0.92);transform-origin:0 0;">EC3: max. Ausnutzung</div><svg style="position:absolute;left:231.0px;top:357.55px;overflow:visible" width="5.5" height="5.5" viewBox="0 0 5.5 5.5"><rect x="0.5" y="0.5" width="4.5" height="4.5" fill="#fcfcfc" stroke="#1a1a1a" stroke-width="1"/><path d="M1.4,2.75 H4.1" stroke="#000" stroke-width="1"/></svg><svg style="position:absolute;left:244.8px;top:357.7px;overflow:visible" width="5" height="6" viewBox="0 0 5 6"><circle cx="2.5" cy="1.3" r="1.1" fill="#2a2a2a"/><path d="M2.5,2 L0.5,5 H4.5 Z" fill="#2a2a2a"/><path d="M0,5.3 H5" stroke="#222" stroke-width="0.6"/></svg><div style="position:absolute;left:252.60px;top:357.20px;height:6.2px;line-height:6.2px;padding:0 0.65px;font-size:5.7px;color:#222;letter-spacing:0.0px;-webkit-text-stroke:0.05px #222;white-space:nowrap;transform:scaleX(0.92);transform-origin:0 0;box-shadow:inset 0 0 0 0.8px #f2ee60;">Lagerknoten</div><svg style="position:absolute;left:255.6px;top:367.7px;overflow:visible" width="9" height="9" viewBox="0 0 9 9"><path d="M0.9,0.5 h2.6 l1.2,1.2 v5.2 h-3.8 z" fill="#66664e" stroke="#262620" stroke-width="0.55"/><path d="M1.8,1.2 v5 M2.8,1.6 v4.6" stroke="#a8a890" stroke-width="0.4"/><path d="M3.6,1.4 h2.8 l1.6,1.6 v5 h-4.4 z" fill="#8a8e7c" stroke="#1e1e1e" stroke-width="0.6"/><path d="M6.4,1.4 v1.6 h1.6 z" fill="#111"/><path d="M4.6,4.4 h2.6 M4.6,6 h2.6 M5.8,3.2 v4.4" stroke="#c8d0c0" stroke-width="0.4"/><circle cx="6.6" cy="6.4" r="0.6" fill="#eef4e8"/></svg><div style="position:absolute;left:265.40px;top:367.60px;height:6.2px;line-height:6.2px;padding:0 0.65px;font-size:5.7px;color:#222;letter-spacing:0.0px;-webkit-text-stroke:0.05px #222;white-space:nowrap;transform:scaleX(0.92);transform-origin:0 0;">Ergebnisse</div><svg style="position:absolute;left:255.6px;top:378.1px;overflow:visible" width="9" height="9" viewBox="0 0 9 9"><path d="M0.9,0.5 h2.6 l1.2,1.2 v5.2 h-3.8 z" fill="#66664e" stroke="#262620" stroke-width="0.55"/><path d="M1.8,1.2 v5 M2.8,1.6 v4.6" stroke="#a8a890" stroke-width="0.4"/><path d="M3.6,1.4 h2.8 l1.6,1.6 v5 h-4.4 z" fill="#8a8e7c" stroke="#1e1e1e" stroke-width="0.6"/><path d="M6.4,1.4 v1.6 h1.6 z" fill="#111"/><path d="M4.6,4.4 h2.6 M4.6,6 h2.6 M5.8,3.2 v4.4" stroke="#c8d0c0" stroke-width="0.4"/><circle cx="6.6" cy="6.4" r="0.6" fill="#eef4e8"/></svg><div style="position:absolute;left:265.40px;top:378.00px;height:6.2px;line-height:6.2px;padding:0 0.65px;font-size:5.7px;color:#222;letter-spacing:0.0px;-webkit-text-stroke:0.05px #222;white-space:nowrap;transform:scaleX(0.92);transform-origin:0 0;">Verformungen</div><svg style="position:absolute;left:255.6px;top:388.5px;overflow:visible" width="9" height="9" viewBox="0 0 9 9"><path d="M0.9,0.5 h2.6 l1.2,1.2 v5.2 h-3.8 z" fill="#66664e" stroke="#262620" stroke-width="0.55"/><path d="M1.8,1.2 v5 M2.8,1.6 v4.6" stroke="#a8a890" stroke-width="0.4"/><path d="M3.6,1.4 h2.8 l1.6,1.6 v5 h-4.4 z" fill="#8a8e7c" stroke="#1e1e1e" stroke-width="0.6"/><path d="M6.4,1.4 v1.6 h1.6 z" fill="#111"/><path d="M4.6,4.4 h2.6 M4.6,6 h2.6 M5.8,3.2 v4.4" stroke="#c8d0c0" stroke-width="0.4"/><circle cx="6.6" cy="6.4" r="0.6" fill="#eef4e8"/></svg><div style="position:absolute;left:265.40px;top:388.40px;height:6.2px;line-height:6.2px;padding:0 0.65px;font-size:5.7px;color:#222;letter-spacing:0.0px;-webkit-text-stroke:0.05px #222;white-space:nowrap;transform:scaleX(0.92);transform-origin:0 0;">Verschiebungen</div><svg style="position:absolute;left:255.6px;top:398.90000000000003px;overflow:visible" width="9" height="9" viewBox="0 0 9 9"><path d="M0.9,0.5 h2.6 l1.2,1.2 v5.2 h-3.8 z" fill="#66664e" stroke="#262620" stroke-width="0.55"/><path d="M1.8,1.2 v5 M2.8,1.6 v4.6" stroke="#a8a890" stroke-width="0.4"/><path d="M3.6,1.4 h2.8 l1.6,1.6 v5 h-4.4 z" fill="#8a8e7c" stroke="#1e1e1e" stroke-width="0.6"/><path d="M6.4,1.4 v1.6 h1.6 z" fill="#111"/><path d="M4.6,4.4 h2.6 M4.6,6 h2.6 M5.8,3.2 v4.4" stroke="#c8d0c0" stroke-width="0.4"/><circle cx="6.6" cy="6.4" r="0.6" fill="#eef4e8"/></svg><div style="position:absolute;left:265.40px;top:398.80px;height:6.2px;line-height:6.2px;padding:0 0.65px;font-size:5.7px;color:#000;letter-spacing:0.0px;-webkit-text-stroke:0.06px #000;white-space:nowrap;transform:scaleX(0.92);transform-origin:0 0;background:#ffff00;">Lagerreaktionen</div><svg style="position:absolute;left:255.6px;top:409.3px;overflow:visible" width="9" height="9" viewBox="0 0 9 9"><path d="M0.9,0.5 h2.6 l1.2,1.2 v5.2 h-3.8 z" fill="#66664e" stroke="#262620" stroke-width="0.55"/><path d="M1.8,1.2 v5 M2.8,1.6 v4.6" stroke="#a8a890" stroke-width="0.4"/><path d="M3.6,1.4 h2.8 l1.6,1.6 v5 h-4.4 z" fill="#8a8e7c" stroke="#1e1e1e" stroke-width="0.6"/><path d="M6.4,1.4 v1.6 h1.6 z" fill="#111"/><path d="M4.6,4.4 h2.6 M4.6,6 h2.6 M5.8,3.2 v4.4" stroke="#c8d0c0" stroke-width="0.4"/><circle cx="6.6" cy="6.4" r="0.6" fill="#eef4e8"/></svg><div style="position:absolute;left:265.40px;top:409.20px;height:6.2px;line-height:6.2px;padding:0 0.65px;font-size:5.7px;color:#222;letter-spacing:0.0px;-webkit-text-stroke:0.05px #222;white-space:nowrap;transform:scaleX(0.92);transform-origin:0 0;">Lagerkräfte</div><svg style="position:absolute;left:255.6px;top:419.7px;overflow:visible" width="9" height="9" viewBox="0 0 9 9"><path d="M0.9,0.5 h2.6 l1.2,1.2 v5.2 h-3.8 z" fill="#66664e" stroke="#262620" stroke-width="0.55"/><path d="M1.8,1.2 v5 M2.8,1.6 v4.6" stroke="#a8a890" stroke-width="0.4"/><path d="M3.6,1.4 h2.8 l1.6,1.6 v5 h-4.4 z" fill="#8a8e7c" stroke="#1e1e1e" stroke-width="0.6"/><path d="M6.4,1.4 v1.6 h1.6 z" fill="#111"/><path d="M4.6,4.4 h2.6 M4.6,6 h2.6 M5.8,3.2 v4.4" stroke="#c8d0c0" stroke-width="0.4"/><circle cx="6.6" cy="6.4" r="0.6" fill="#eef4e8"/></svg><div style="position:absolute;left:265.40px;top:419.60px;height:6.2px;line-height:6.2px;padding:0 0.65px;font-size:5.7px;color:#222;letter-spacing:0.0px;-webkit-text-stroke:0.05px #222;white-space:nowrap;transform:scaleX(0.92);transform-origin:0 0;">Lagermomente</div><svg style="position:absolute;left:231.0px;top:430.35px;overflow:visible" width="5.5" height="5.5" viewBox="0 0 5.5 5.5"><rect x="0.5" y="0.5" width="4.5" height="4.5" fill="#fcfcfc" stroke="#1a1a1a" stroke-width="1"/><path d="M1.4,2.75 H4.1" stroke="#000" stroke-width="1"/></svg><svg style="position:absolute;left:245.4px;top:430.90000000000003px;overflow:visible" width="5" height="5" viewBox="0 0 5 5"><circle cx="2.2" cy="2.2" r="1.6" fill="#505050" stroke="#1a1a1a" stroke-width="0.7"/><circle cx="2.2" cy="2.2" r="0.55" fill="#d8d8d8"/></svg><div style="position:absolute;left:252.60px;top:430.00px;height:6.2px;line-height:6.2px;padding:0 0.65px;font-size:5.7px;color:#222;letter-spacing:0.0px;-webkit-text-stroke:0.05px #222;white-space:nowrap;transform:scaleX(0.92);transform-origin:0 0;">Knoten</div><svg style="position:absolute;left:255.6px;top:440.5px;overflow:visible" width="9" height="9" viewBox="0 0 9 9"><path d="M0.9,0.5 h2.6 l1.2,1.2 v5.2 h-3.8 z" fill="#66664e" stroke="#262620" stroke-width="0.55"/><path d="M1.8,1.2 v5 M2.8,1.6 v4.6" stroke="#a8a890" stroke-width="0.4"/><path d="M3.6,1.4 h2.8 l1.6,1.6 v5 h-4.4 z" fill="#8a8e7c" stroke="#1e1e1e" stroke-width="0.6"/><path d="M6.4,1.4 v1.6 h1.6 z" fill="#111"/><path d="M4.6,4.4 h2.6 M4.6,6 h2.6 M5.8,3.2 v4.4" stroke="#c8d0c0" stroke-width="0.4"/><circle cx="6.6" cy="6.4" r="0.6" fill="#eef4e8"/></svg><div style="position:absolute;left:265.40px;top:440.40px;height:6.2px;line-height:6.2px;padding:0 0.65px;font-size:5.7px;color:#222;letter-spacing:0.0px;-webkit-text-stroke:0.05px #222;white-space:nowrap;transform:scaleX(0.92);transform-origin:0 0;">Verformungen</div><svg style="position:absolute;left:255.6px;top:450.90000000000003px;overflow:visible" width="9" height="9" viewBox="0 0 9 9"><path d="M0.9,0.5 h2.6 l1.2,1.2 v5.2 h-3.8 z" fill="#66664e" stroke="#262620" stroke-width="0.55"/><path d="M1.8,1.2 v5 M2.8,1.6 v4.6" stroke="#a8a890" stroke-width="0.4"/><path d="M3.6,1.4 h2.8 l1.6,1.6 v5 h-4.4 z" fill="#8a8e7c" stroke="#1e1e1e" stroke-width="0.6"/><path d="M6.4,1.4 v1.6 h1.6 z" fill="#111"/><path d="M4.6,4.4 h2.6 M4.6,6 h2.6 M5.8,3.2 v4.4" stroke="#c8d0c0" stroke-width="0.4"/><circle cx="6.6" cy="6.4" r="0.6" fill="#eef4e8"/></svg><div style="position:absolute;left:265.40px;top:450.80px;height:6.2px;line-height:6.2px;padding:0 0.65px;font-size:5.7px;color:#222;letter-spacing:0.0px;-webkit-text-stroke:0.05px #222;white-space:nowrap;transform:scaleX(0.92);transform-origin:0 0;">Verschiebungen</div></div></div><div style="position:absolute;left:460px;top:81px;width:8px;height:380px;background:linear-gradient(90deg,#e6e6e6 0,#d4d4d4 2px,#d0d0d0 6px,#b4b4b4 7px,#c8c8c8 8px)"></div><div style="position:absolute;left:460px;top:73px;width:8px;height:8px;background:#dadada;box-shadow:inset 1px 1px 0 #f0f0f0, inset -1px -1px 0 #b8b8b8"></div><svg style="position:absolute;left:461.5px;top:75.5px;overflow:visible" width="5" height="2.8" viewBox="0 0 5 2.8"><path d="M2.5,0 L5,2.8 L0,2.8 Z" fill="#a4a4a4"/></svg><div style="position:absolute;left:460px;top:461px;width:8px;height:8px;background:#dadada;box-shadow:inset 1px 1px 0 #f0f0f0, inset -1px -1px 0 #b8b8b8"></div><svg style="position:absolute;left:461.5px;top:463.5px;overflow:visible" width="5" height="2.8" viewBox="0 0 5 2.8"><path d="M0,0 L5,0 L2.5,2.8 Z" fill="#a4a4a4"/></svg><div style="position:absolute;left:234px;top:469px;width:218px;height:8px;background:linear-gradient(180deg,#e4e4e4 0,#d6d6d6 4px,#7a7a7a 4px,#7a7a7a 5px,#d4d4d4 5px,#d4d4d4 7px,#b0b0b0 7px)"></div><div style="position:absolute;left:234px;top:469px;width:154px;height:8px;background:#e4e4e4;box-shadow:inset 1px 1px 0 #fafafa, inset -1px -1px 0 #8a8a8a"></div><div style="position:absolute;left:226px;top:469px;width:8px;height:8px;background:#e2e2e2;box-shadow:inset 1px 1px 0 #fff, inset -1px -1px 0 #8c8c8c"></div><svg style="position:absolute;left:228.65px;top:470.7px;overflow:visible" width="2.7" height="4.6" viewBox="0 0 2.7 4.6"><path d="M0,2.3 L2.7,0 L2.7,4.6 Z" fill="#000"/></svg><div style="position:absolute;left:452px;top:469px;width:8px;height:8px;background:#e2e2e2;box-shadow:inset 1px 1px 0 #fff, inset -1px -1px 0 #8c8c8c"></div><svg style="position:absolute;left:454.65px;top:470.7px;overflow:visible" width="2.7" height="4.6" viewBox="0 0 2.7 4.6"><path d="M0,0 L2.7,2.3 L0,4.6 Z" fill="#000"/></svg><div style="position:absolute;left:460px;top:469px;width:8px;height:8px;background:#d2d2d2"></div><div style="position:absolute;left:472px;top:70px;width:201px;height:408px;border:1px solid;border-color:#a0a0a0 #dedede #dedede #a0a0a0"></div><div style="position:absolute;left:473px;top:71px;width:199px;height:406px;border:1px solid;border-color:#fafafa #a0a0a0 #a0a0a0 #fafafa"></div><div style="position:absolute;left:474px;top:72px;width:197px;height:404px;border:1px solid;border-color:#6e6e6e #ececec #ececec #6e6e6e"></div><div style="position:absolute;left:475px;top:73px;width:189px;height:396px;overflow:hidden;background:#fffaf0"><div style="position:absolute;left:-475px;top:-73px;width:682px;height:514px"><div style="position:absolute;left:482.70px;top:83.10px;width:1px;height:381.70px;background:#f6d2ac"></div><div style="position:absolute;left:483.20px;top:89.80px;width:9.00px;height:1px;background:#f6d2ac"></div><div style="position:absolute;left:483.20px;top:100.20px;width:9.00px;height:1px;background:#f6d2ac"></div><div style="position:absolute;left:483.20px;top:110.60px;width:9.00px;height:1px;background:#f6d2ac"></div><div style="position:absolute;left:483.20px;top:121.00px;width:9.00px;height:1px;background:#f6d2ac"></div><div style="position:absolute;left:483.20px;top:131.40px;width:9.00px;height:1px;background:#f6d2ac"></div><div style="position:absolute;left:483.20px;top:141.80px;width:9.00px;height:1px;background:#f6d2ac"></div><div style="position:absolute;left:483.20px;top:152.20px;width:9.00px;height:1px;background:#f6d2ac"></div><div style="position:absolute;left:483.20px;top:162.60px;width:9.00px;height:1px;background:#f6d2ac"></div><div style="position:absolute;left:483.20px;top:173.00px;width:9.00px;height:1px;background:#f6d2ac"></div><div style="position:absolute;left:483.20px;top:183.40px;width:9.00px;height:1px;background:#f6d2ac"></div><div style="position:absolute;left:483.20px;top:193.80px;width:9.00px;height:1px;background:#f6d2ac"></div><div style="position:absolute;left:483.20px;top:204.20px;width:9.00px;height:1px;background:#f6d2ac"></div><div style="position:absolute;left:483.20px;top:214.60px;width:9.00px;height:1px;background:#f6d2ac"></div><div style="position:absolute;left:483.20px;top:225.00px;width:9.00px;height:1px;background:#f6d2ac"></div><div style="position:absolute;left:483.20px;top:235.40px;width:9.00px;height:1px;background:#f6d2ac"></div><div style="position:absolute;left:483.20px;top:245.80px;width:9.00px;height:1px;background:#f6d2ac"></div><div style="position:absolute;left:483.20px;top:256.20px;width:9.00px;height:1px;background:#f6d2ac"></div><div style="position:absolute;left:483.20px;top:266.60px;width:9.00px;height:1px;background:#f6d2ac"></div><div style="position:absolute;left:483.20px;top:277.00px;width:9.00px;height:1px;background:#f6d2ac"></div><div style="position:absolute;left:483.20px;top:287.40px;width:9.00px;height:1px;background:#f6d2ac"></div><div style="position:absolute;left:483.20px;top:297.80px;width:9.00px;height:1px;background:#f6d2ac"></div><div style="position:absolute;left:483.20px;top:308.20px;width:9.00px;height:1px;background:#f6d2ac"></div><div style="position:absolute;left:483.20px;top:318.60px;width:9.00px;height:1px;background:#f6d2ac"></div><div style="position:absolute;left:483.20px;top:329.00px;width:9.00px;height:1px;background:#f6d2ac"></div><div style="position:absolute;left:483.20px;top:339.40px;width:9.00px;height:1px;background:#f6d2ac"></div><div style="position:absolute;left:483.20px;top:349.80px;width:9.00px;height:1px;background:#f6d2ac"></div><div style="position:absolute;left:483.20px;top:360.20px;width:9.00px;height:1px;background:#f6d2ac"></div><div style="position:absolute;left:483.20px;top:370.60px;width:9.00px;height:1px;background:#f6d2ac"></div><div style="position:absolute;left:483.20px;top:381.00px;width:9.00px;height:1px;background:#f6d2ac"></div><div style="position:absolute;left:483.20px;top:391.40px;width:9.00px;height:1px;background:#f6d2ac"></div><div style="position:absolute;left:483.20px;top:401.80px;width:9.00px;height:1px;background:#f6d2ac"></div><div style="position:absolute;left:483.20px;top:412.20px;width:9.00px;height:1px;background:#f6d2ac"></div><div style="position:absolute;left:483.20px;top:422.60px;width:9.00px;height:1px;background:#f6d2ac"></div><div style="position:absolute;left:483.20px;top:433.00px;width:9.00px;height:1px;background:#f6d2ac"></div><div style="position:absolute;left:483.20px;top:443.40px;width:9.00px;height:1px;background:#f6d2ac"></div><div style="position:absolute;left:483.20px;top:453.80px;width:9.00px;height:1px;background:#f6d2ac"></div><div style="position:absolute;left:483.20px;top:464.20px;width:9.00px;height:1px;background:#f6d2ac"></div><svg style="position:absolute;left:477.8px;top:77.3px;overflow:visible" width="10" height="7" viewBox="0 0 10 7"><path d="M3.9,4.3 L9.6,1 L9.3,2.5 L4,5.6 Z" fill="#3a3a3a"/><path d="M1.2,4.5 L4.2,4.8 L3.8,6.5 L1.1,6.2 Z" fill="#2a2a2a"/><path d="M0.7,3.7 L6.6,0.4 L9.6,0.9 L3.9,4.3 Z" fill="#9c9c8c" stroke="#1a1a1a" stroke-width="0.7" stroke-linejoin="round"/><path d="M2.4,3.3 L7.6,0.95" stroke="#e6e6d8" stroke-width="0.7"/></svg><div style="position:absolute;left:488.80px;top:76.40px;height:6.2px;line-height:6.2px;padding:0 0.65px;font-size:5.7px;color:#000;letter-spacing:0.0px;-webkit-text-stroke:0.06px #000;white-space:nowrap;transform:scaleX(0.92);transform-origin:0 0;background:#ffff00;">Stäbe</div><svg style="position:absolute;left:491.0px;top:87.7px;overflow:visible" width="10" height="7" viewBox="0 0 10 7"><path d="M3.9,4.3 L9.6,1 L9.3,2.5 L4,5.6 Z" fill="#3a3a3a"/><path d="M1.2,4.5 L4.2,4.8 L3.8,6.5 L1.1,6.2 Z" fill="#2a2a2a"/><path d="M0.7,3.7 L6.6,0.4 L9.6,0.9 L3.9,4.3 Z" fill="#9c9c8c" stroke="#1a1a1a" stroke-width="0.7" stroke-linejoin="round"/><path d="M2.4,3.3 L7.6,0.95" stroke="#e6e6d8" stroke-width="0.7"/></svg><div style="position:absolute;left:501.60px;top:86.80px;height:6.2px;line-height:6.2px;padding:0 0.65px;font-size:5.7px;color:#000;letter-spacing:0.0px;-webkit-text-stroke:0.06px #000;white-space:nowrap;transform:scaleX(0.92);transform-origin:0 0;background:#ffff00;">1: Kragstrebe_Lauf1</div><svg style="position:absolute;left:491.0px;top:98.1px;overflow:visible" width="10" height="7" viewBox="0 0 10 7"><path d="M3.9,4.3 L9.6,1 L9.3,2.5 L4,5.6 Z" fill="#3a3a3a"/><path d="M1.2,4.5 L4.2,4.8 L3.8,6.5 L1.1,6.2 Z" fill="#2a2a2a"/><path d="M0.7,3.7 L6.6,0.4 L9.6,0.9 L3.9,4.3 Z" fill="#9c9c8c" stroke="#1a1a1a" stroke-width="0.7" stroke-linejoin="round"/><path d="M2.4,3.3 L7.6,0.95" stroke="#e6e6d8" stroke-width="0.7"/></svg><div style="position:absolute;left:501.60px;top:97.20px;height:6.2px;line-height:6.2px;padding:0 0.65px;font-size:5.7px;color:#000;letter-spacing:0.0px;-webkit-text-stroke:0.06px #000;white-space:nowrap;transform:scaleX(0.92);transform-origin:0 0;background:#ffff00;">2: Lauf1_links</div><svg style="position:absolute;left:491.0px;top:108.5px;overflow:visible" width="10" height="7" viewBox="0 0 10 7"><path d="M3.9,4.3 L9.6,1 L9.3,2.5 L4,5.6 Z" fill="#3a3a3a"/><path d="M1.2,4.5 L4.2,4.8 L3.8,6.5 L1.1,6.2 Z" fill="#2a2a2a"/><path d="M0.7,3.7 L6.6,0.4 L9.6,0.9 L3.9,4.3 Z" fill="#9c9c8c" stroke="#1a1a1a" stroke-width="0.7" stroke-linejoin="round"/><path d="M2.4,3.3 L7.6,0.95" stroke="#e6e6d8" stroke-width="0.7"/></svg><div style="position:absolute;left:501.60px;top:107.60px;height:6.2px;line-height:6.2px;padding:0 0.65px;font-size:5.7px;color:#000;letter-spacing:0.0px;-webkit-text-stroke:0.06px #000;white-space:nowrap;transform:scaleX(0.92);transform-origin:0 0;background:#ffff00;">3: Lauf1_rechts</div><svg style="position:absolute;left:491.0px;top:118.89999999999999px;overflow:visible" width="10" height="7" viewBox="0 0 10 7"><path d="M3.9,4.3 L9.6,1 L9.3,2.5 L4,5.6 Z" fill="#3a3a3a"/><path d="M1.2,4.5 L4.2,4.8 L3.8,6.5 L1.1,6.2 Z" fill="#2a2a2a"/><path d="M0.7,3.7 L6.6,0.4 L9.6,0.9 L3.9,4.3 Z" fill="#9c9c8c" stroke="#1a1a1a" stroke-width="0.7" stroke-linejoin="round"/><path d="M2.4,3.3 L7.6,0.95" stroke="#e6e6d8" stroke-width="0.7"/></svg><div style="position:absolute;left:501.60px;top:118.00px;height:6.2px;line-height:6.2px;padding:0 0.65px;font-size:5.7px;color:#000;letter-spacing:0.0px;-webkit-text-stroke:0.06px #000;white-space:nowrap;transform:scaleX(0.92);transform-origin:0 0;background:#ffff00;">4: Lauf2_links</div><svg style="position:absolute;left:491.0px;top:129.3px;overflow:visible" width="10" height="7" viewBox="0 0 10 7"><path d="M3.9,4.3 L9.6,1 L9.3,2.5 L4,5.6 Z" fill="#3a3a3a"/><path d="M1.2,4.5 L4.2,4.8 L3.8,6.5 L1.1,6.2 Z" fill="#2a2a2a"/><path d="M0.7,3.7 L6.6,0.4 L9.6,0.9 L3.9,4.3 Z" fill="#9c9c8c" stroke="#1a1a1a" stroke-width="0.7" stroke-linejoin="round"/><path d="M2.4,3.3 L7.6,0.95" stroke="#e6e6d8" stroke-width="0.7"/></svg><div style="position:absolute;left:501.60px;top:128.40px;height:6.2px;line-height:6.2px;padding:0 0.65px;font-size:5.7px;color:#000;letter-spacing:0.0px;-webkit-text-stroke:0.06px #000;white-space:nowrap;transform:scaleX(0.92);transform-origin:0 0;background:#ffff00;">5: Lauf2_rechts</div><svg style="position:absolute;left:491.0px;top:139.70000000000002px;overflow:visible" width="10" height="7" viewBox="0 0 10 7"><path d="M3.9,4.3 L9.6,1 L9.3,2.5 L4,5.6 Z" fill="#3a3a3a"/><path d="M1.2,4.5 L4.2,4.8 L3.8,6.5 L1.1,6.2 Z" fill="#2a2a2a"/><path d="M0.7,3.7 L6.6,0.4 L9.6,0.9 L3.9,4.3 Z" fill="#9c9c8c" stroke="#1a1a1a" stroke-width="0.7" stroke-linejoin="round"/><path d="M2.4,3.3 L7.6,0.95" stroke="#e6e6d8" stroke-width="0.7"/></svg><div style="position:absolute;left:501.60px;top:138.80px;height:6.2px;line-height:6.2px;padding:0 0.65px;font-size:5.7px;color:#000;letter-spacing:0.0px;-webkit-text-stroke:0.06px #000;white-space:nowrap;transform:scaleX(0.92);transform-origin:0 0;background:#ffff00;">6: Lauf3_links</div><svg style="position:absolute;left:491.0px;top:150.10000000000002px;overflow:visible" width="10" height="7" viewBox="0 0 10 7"><path d="M3.9,4.3 L9.6,1 L9.3,2.5 L4,5.6 Z" fill="#3a3a3a"/><path d="M1.2,4.5 L4.2,4.8 L3.8,6.5 L1.1,6.2 Z" fill="#2a2a2a"/><path d="M0.7,3.7 L6.6,0.4 L9.6,0.9 L3.9,4.3 Z" fill="#9c9c8c" stroke="#1a1a1a" stroke-width="0.7" stroke-linejoin="round"/><path d="M2.4,3.3 L7.6,0.95" stroke="#e6e6d8" stroke-width="0.7"/></svg><div style="position:absolute;left:501.60px;top:149.20px;height:6.2px;line-height:6.2px;padding:0 0.65px;font-size:5.7px;color:#000;letter-spacing:0.0px;-webkit-text-stroke:0.06px #000;white-space:nowrap;transform:scaleX(0.92);transform-origin:0 0;background:#ffff00;">7: Lauf3_rechts</div><svg style="position:absolute;left:491.0px;top:160.5px;overflow:visible" width="10" height="7" viewBox="0 0 10 7"><path d="M3.9,4.3 L9.6,1 L9.3,2.5 L4,5.6 Z" fill="#3a3a3a"/><path d="M1.2,4.5 L4.2,4.8 L3.8,6.5 L1.1,6.2 Z" fill="#2a2a2a"/><path d="M0.7,3.7 L6.6,0.4 L9.6,0.9 L3.9,4.3 Z" fill="#9c9c8c" stroke="#1a1a1a" stroke-width="0.7" stroke-linejoin="round"/><path d="M2.4,3.3 L7.6,0.95" stroke="#e6e6d8" stroke-width="0.7"/></svg><div style="position:absolute;left:501.60px;top:159.60px;height:6.2px;line-height:6.2px;padding:0 0.65px;font-size:5.7px;color:#000;letter-spacing:0.0px;-webkit-text-stroke:0.06px #000;white-space:nowrap;transform:scaleX(0.92);transform-origin:0 0;background:#ffff00;">8: Lauf4_links</div><svg style="position:absolute;left:491.0px;top:170.90000000000003px;overflow:visible" width="10" height="7" viewBox="0 0 10 7"><path d="M3.9,4.3 L9.6,1 L9.3,2.5 L4,5.6 Z" fill="#3a3a3a"/><path d="M1.2,4.5 L4.2,4.8 L3.8,6.5 L1.1,6.2 Z" fill="#2a2a2a"/><path d="M0.7,3.7 L6.6,0.4 L9.6,0.9 L3.9,4.3 Z" fill="#9c9c8c" stroke="#1a1a1a" stroke-width="0.7" stroke-linejoin="round"/><path d="M2.4,3.3 L7.6,0.95" stroke="#e6e6d8" stroke-width="0.7"/></svg><div style="position:absolute;left:501.60px;top:170.00px;height:6.2px;line-height:6.2px;padding:0 0.65px;font-size:5.7px;color:#000;letter-spacing:0.0px;-webkit-text-stroke:0.06px #000;white-space:nowrap;transform:scaleX(0.92);transform-origin:0 0;background:#ffff00;">9: Lauf4_rechts</div><svg style="position:absolute;left:491.0px;top:181.3px;overflow:visible" width="10" height="7" viewBox="0 0 10 7"><path d="M3.9,4.3 L9.6,1 L9.3,2.5 L4,5.6 Z" fill="#3a3a3a"/><path d="M1.2,4.5 L4.2,4.8 L3.8,6.5 L1.1,6.2 Z" fill="#2a2a2a"/><path d="M0.7,3.7 L6.6,0.4 L9.6,0.9 L3.9,4.3 Z" fill="#9c9c8c" stroke="#1a1a1a" stroke-width="0.7" stroke-linejoin="round"/><path d="M2.4,3.3 L7.6,0.95" stroke="#e6e6d8" stroke-width="0.7"/></svg><div style="position:absolute;left:501.60px;top:180.40px;height:6.2px;line-height:6.2px;padding:0 0.65px;font-size:5.7px;color:#000;letter-spacing:0.0px;-webkit-text-stroke:0.06px #000;white-space:nowrap;transform:scaleX(0.92);transform-origin:0 0;background:#ffff00;">10: Lauf5_links</div><svg style="position:absolute;left:491.0px;top:191.70000000000002px;overflow:visible" width="10" height="7" viewBox="0 0 10 7"><path d="M3.9,4.3 L9.6,1 L9.3,2.5 L4,5.6 Z" fill="#3a3a3a"/><path d="M1.2,4.5 L4.2,4.8 L3.8,6.5 L1.1,6.2 Z" fill="#2a2a2a"/><path d="M0.7,3.7 L6.6,0.4 L9.6,0.9 L3.9,4.3 Z" fill="#9c9c8c" stroke="#1a1a1a" stroke-width="0.7" stroke-linejoin="round"/><path d="M2.4,3.3 L7.6,0.95" stroke="#e6e6d8" stroke-width="0.7"/></svg><div style="position:absolute;left:501.60px;top:190.80px;height:6.2px;line-height:6.2px;padding:0 0.65px;font-size:5.7px;color:#000;letter-spacing:0.0px;-webkit-text-stroke:0.06px #000;white-space:nowrap;transform:scaleX(0.92);transform-origin:0 0;background:#ffff00;">11: Lauf5_rechts</div><svg style="position:absolute;left:491.0px;top:202.10000000000002px;overflow:visible" width="10" height="7" viewBox="0 0 10 7"><path d="M3.9,4.3 L9.6,1 L9.3,2.5 L4,5.6 Z" fill="#3a3a3a"/><path d="M1.2,4.5 L4.2,4.8 L3.8,6.5 L1.1,6.2 Z" fill="#2a2a2a"/><path d="M0.7,3.7 L6.6,0.4 L9.6,0.9 L3.9,4.3 Z" fill="#9c9c8c" stroke="#1a1a1a" stroke-width="0.7" stroke-linejoin="round"/><path d="M2.4,3.3 L7.6,0.95" stroke="#e6e6d8" stroke-width="0.7"/></svg><div style="position:absolute;left:501.60px;top:201.20px;height:6.2px;line-height:6.2px;padding:0 0.65px;font-size:5.7px;color:#000;letter-spacing:0.0px;-webkit-text-stroke:0.06px #000;white-space:nowrap;transform:scaleX(0.92);transform-origin:0 0;background:#ffff00;">12: Lauf6_links</div><svg style="position:absolute;left:491.0px;top:212.50000000000003px;overflow:visible" width="10" height="7" viewBox="0 0 10 7"><path d="M3.9,4.3 L9.6,1 L9.3,2.5 L4,5.6 Z" fill="#3a3a3a"/><path d="M1.2,4.5 L4.2,4.8 L3.8,6.5 L1.1,6.2 Z" fill="#2a2a2a"/><path d="M0.7,3.7 L6.6,0.4 L9.6,0.9 L3.9,4.3 Z" fill="#9c9c8c" stroke="#1a1a1a" stroke-width="0.7" stroke-linejoin="round"/><path d="M2.4,3.3 L7.6,0.95" stroke="#e6e6d8" stroke-width="0.7"/></svg><div style="position:absolute;left:501.60px;top:211.60px;height:6.2px;line-height:6.2px;padding:0 0.65px;font-size:5.7px;color:#000;letter-spacing:0.0px;-webkit-text-stroke:0.06px #000;white-space:nowrap;transform:scaleX(0.92);transform-origin:0 0;background:#ffff00;">13: Lauf6_rechs</div><svg style="position:absolute;left:491.0px;top:222.9px;overflow:visible" width="10" height="7" viewBox="0 0 10 7"><path d="M3.9,4.3 L9.6,1 L9.3,2.5 L4,5.6 Z" fill="#3a3a3a"/><path d="M1.2,4.5 L4.2,4.8 L3.8,6.5 L1.1,6.2 Z" fill="#2a2a2a"/><path d="M0.7,3.7 L6.6,0.4 L9.6,0.9 L3.9,4.3 Z" fill="#9c9c8c" stroke="#1a1a1a" stroke-width="0.7" stroke-linejoin="round"/><path d="M2.4,3.3 L7.6,0.95" stroke="#e6e6d8" stroke-width="0.7"/></svg><div style="position:absolute;left:501.60px;top:222.00px;height:6.2px;line-height:6.2px;padding:0 0.65px;font-size:5.7px;color:#000;letter-spacing:0.0px;-webkit-text-stroke:0.06px #000;white-space:nowrap;transform:scaleX(0.92);transform-origin:0 0;background:#ffff00;">14: Kragstrebe_Lauf2_u</div><svg style="position:absolute;left:491.0px;top:233.3px;overflow:visible" width="10" height="7" viewBox="0 0 10 7"><path d="M3.9,4.3 L9.6,1 L9.3,2.5 L4,5.6 Z" fill="#3a3a3a"/><path d="M1.2,4.5 L4.2,4.8 L3.8,6.5 L1.1,6.2 Z" fill="#2a2a2a"/><path d="M0.7,3.7 L6.6,0.4 L9.6,0.9 L3.9,4.3 Z" fill="#9c9c8c" stroke="#1a1a1a" stroke-width="0.7" stroke-linejoin="round"/><path d="M2.4,3.3 L7.6,0.95" stroke="#e6e6d8" stroke-width="0.7"/></svg><div style="position:absolute;left:501.60px;top:232.40px;height:6.2px;line-height:6.2px;padding:0 0.65px;font-size:5.7px;color:#000;letter-spacing:0.0px;-webkit-text-stroke:0.06px #000;white-space:nowrap;transform:scaleX(0.92);transform-origin:0 0;background:#ffff00;">15: Kragstrebe_Lauf2_o</div><svg style="position:absolute;left:491.0px;top:243.70000000000002px;overflow:visible" width="10" height="7" viewBox="0 0 10 7"><path d="M3.9,4.3 L9.6,1 L9.3,2.5 L4,5.6 Z" fill="#3a3a3a"/><path d="M1.2,4.5 L4.2,4.8 L3.8,6.5 L1.1,6.2 Z" fill="#2a2a2a"/><path d="M0.7,3.7 L6.6,0.4 L9.6,0.9 L3.9,4.3 Z" fill="#9c9c8c" stroke="#1a1a1a" stroke-width="0.7" stroke-linejoin="round"/><path d="M2.4,3.3 L7.6,0.95" stroke="#e6e6d8" stroke-width="0.7"/></svg><div style="position:absolute;left:501.60px;top:242.80px;height:6.2px;line-height:6.2px;padding:0 0.65px;font-size:5.7px;color:#000;letter-spacing:0.0px;-webkit-text-stroke:0.06px #000;white-space:nowrap;transform:scaleX(0.92);transform-origin:0 0;background:#ffff00;">16: Kragstrebe_Lauf3_u</div><svg style="position:absolute;left:491.0px;top:254.10000000000002px;overflow:visible" width="10" height="7" viewBox="0 0 10 7"><path d="M3.9,4.3 L9.6,1 L9.3,2.5 L4,5.6 Z" fill="#3a3a3a"/><path d="M1.2,4.5 L4.2,4.8 L3.8,6.5 L1.1,6.2 Z" fill="#2a2a2a"/><path d="M0.7,3.7 L6.6,0.4 L9.6,0.9 L3.9,4.3 Z" fill="#9c9c8c" stroke="#1a1a1a" stroke-width="0.7" stroke-linejoin="round"/><path d="M2.4,3.3 L7.6,0.95" stroke="#e6e6d8" stroke-width="0.7"/></svg><div style="position:absolute;left:501.60px;top:253.20px;height:6.2px;line-height:6.2px;padding:0 0.65px;font-size:5.7px;color:#000;letter-spacing:0.0px;-webkit-text-stroke:0.06px #000;white-space:nowrap;transform:scaleX(0.92);transform-origin:0 0;background:#ffff00;">17: Kragstrebe_Lauf3_o</div><svg style="position:absolute;left:491.0px;top:264.50000000000006px;overflow:visible" width="10" height="7" viewBox="0 0 10 7"><path d="M3.9,4.3 L9.6,1 L9.3,2.5 L4,5.6 Z" fill="#3a3a3a"/><path d="M1.2,4.5 L4.2,4.8 L3.8,6.5 L1.1,6.2 Z" fill="#2a2a2a"/><path d="M0.7,3.7 L6.6,0.4 L9.6,0.9 L3.9,4.3 Z" fill="#9c9c8c" stroke="#1a1a1a" stroke-width="0.7" stroke-linejoin="round"/><path d="M2.4,3.3 L7.6,0.95" stroke="#e6e6d8" stroke-width="0.7"/></svg><div style="position:absolute;left:501.60px;top:263.60px;height:6.2px;line-height:6.2px;padding:0 0.65px;font-size:5.7px;color:#000;letter-spacing:0.0px;-webkit-text-stroke:0.06px #000;white-space:nowrap;transform:scaleX(0.92);transform-origin:0 0;background:#ffff00;">18: Kragstrebe_Lauf4_u</div><svg style="position:absolute;left:491.0px;top:274.90000000000003px;overflow:visible" width="10" height="7" viewBox="0 0 10 7"><path d="M3.9,4.3 L9.6,1 L9.3,2.5 L4,5.6 Z" fill="#3a3a3a"/><path d="M1.2,4.5 L4.2,4.8 L3.8,6.5 L1.1,6.2 Z" fill="#2a2a2a"/><path d="M0.7,3.7 L6.6,0.4 L9.6,0.9 L3.9,4.3 Z" fill="#9c9c8c" stroke="#1a1a1a" stroke-width="0.7" stroke-linejoin="round"/><path d="M2.4,3.3 L7.6,0.95" stroke="#e6e6d8" stroke-width="0.7"/></svg><div style="position:absolute;left:501.60px;top:274.00px;height:6.2px;line-height:6.2px;padding:0 0.65px;font-size:5.7px;color:#000;letter-spacing:0.0px;-webkit-text-stroke:0.06px #000;white-space:nowrap;transform:scaleX(0.92);transform-origin:0 0;background:#ffff00;">19: Kragstrebe_Lauf4_o</div><svg style="position:absolute;left:491.0px;top:285.3px;overflow:visible" width="10" height="7" viewBox="0 0 10 7"><path d="M3.9,4.3 L9.6,1 L9.3,2.5 L4,5.6 Z" fill="#3a3a3a"/><path d="M1.2,4.5 L4.2,4.8 L3.8,6.5 L1.1,6.2 Z" fill="#2a2a2a"/><path d="M0.7,3.7 L6.6,0.4 L9.6,0.9 L3.9,4.3 Z" fill="#9c9c8c" stroke="#1a1a1a" stroke-width="0.7" stroke-linejoin="round"/><path d="M2.4,3.3 L7.6,0.95" stroke="#e6e6d8" stroke-width="0.7"/></svg><div style="position:absolute;left:501.60px;top:284.40px;height:6.2px;line-height:6.2px;padding:0 0.65px;font-size:5.7px;color:#000;letter-spacing:0.0px;-webkit-text-stroke:0.06px #000;white-space:nowrap;transform:scaleX(0.92);transform-origin:0 0;background:#ffff00;">20: Kragstrebe_Lauf5_u</div><svg style="position:absolute;left:491.0px;top:295.7px;overflow:visible" width="10" height="7" viewBox="0 0 10 7"><path d="M3.9,4.3 L9.6,1 L9.3,2.5 L4,5.6 Z" fill="#3a3a3a"/><path d="M1.2,4.5 L4.2,4.8 L3.8,6.5 L1.1,6.2 Z" fill="#2a2a2a"/><path d="M0.7,3.7 L6.6,0.4 L9.6,0.9 L3.9,4.3 Z" fill="#9c9c8c" stroke="#1a1a1a" stroke-width="0.7" stroke-linejoin="round"/><path d="M2.4,3.3 L7.6,0.95" stroke="#e6e6d8" stroke-width="0.7"/></svg><div style="position:absolute;left:501.60px;top:294.80px;height:6.2px;line-height:6.2px;padding:0 0.65px;font-size:5.7px;color:#000;letter-spacing:0.0px;-webkit-text-stroke:0.06px #000;white-space:nowrap;transform:scaleX(0.92);transform-origin:0 0;background:#ffff00;">21: Kragstrebe_Lauf5_o</div><svg style="position:absolute;left:491.0px;top:306.1px;overflow:visible" width="10" height="7" viewBox="0 0 10 7"><path d="M3.9,4.3 L9.6,1 L9.3,2.5 L4,5.6 Z" fill="#3a3a3a"/><path d="M1.2,4.5 L4.2,4.8 L3.8,6.5 L1.1,6.2 Z" fill="#2a2a2a"/><path d="M0.7,3.7 L6.6,0.4 L9.6,0.9 L3.9,4.3 Z" fill="#9c9c8c" stroke="#1a1a1a" stroke-width="0.7" stroke-linejoin="round"/><path d="M2.4,3.3 L7.6,0.95" stroke="#e6e6d8" stroke-width="0.7"/></svg><div style="position:absolute;left:501.60px;top:305.20px;height:6.2px;line-height:6.2px;padding:0 0.65px;font-size:5.7px;color:#000;letter-spacing:0.0px;-webkit-text-stroke:0.06px #000;white-space:nowrap;transform:scaleX(0.92);transform-origin:0 0;background:#ffff00;">22: Zwischenriegel_1_o</div><svg style="position:absolute;left:491.0px;top:316.50000000000006px;overflow:visible" width="10" height="7" viewBox="0 0 10 7"><path d="M3.9,4.3 L9.6,1 L9.3,2.5 L4,5.6 Z" fill="#3a3a3a"/><path d="M1.2,4.5 L4.2,4.8 L3.8,6.5 L1.1,6.2 Z" fill="#2a2a2a"/><path d="M0.7,3.7 L6.6,0.4 L9.6,0.9 L3.9,4.3 Z" fill="#9c9c8c" stroke="#1a1a1a" stroke-width="0.7" stroke-linejoin="round"/><path d="M2.4,3.3 L7.6,0.95" stroke="#e6e6d8" stroke-width="0.7"/></svg><div style="position:absolute;left:501.60px;top:315.60px;height:6.2px;line-height:6.2px;padding:0 0.65px;font-size:5.7px;color:#000;letter-spacing:0.0px;-webkit-text-stroke:0.06px #000;white-space:nowrap;transform:scaleX(0.92);transform-origin:0 0;background:#ffff00;">23: Zwischenriegel_1_i</div><svg style="position:absolute;left:491.0px;top:326.90000000000003px;overflow:visible" width="10" height="7" viewBox="0 0 10 7"><path d="M3.9,4.3 L9.6,1 L9.3,2.5 L4,5.6 Z" fill="#3a3a3a"/><path d="M1.2,4.5 L4.2,4.8 L3.8,6.5 L1.1,6.2 Z" fill="#2a2a2a"/><path d="M0.7,3.7 L6.6,0.4 L9.6,0.9 L3.9,4.3 Z" fill="#9c9c8c" stroke="#1a1a1a" stroke-width="0.7" stroke-linejoin="round"/><path d="M2.4,3.3 L7.6,0.95" stroke="#e6e6d8" stroke-width="0.7"/></svg><div style="position:absolute;left:501.60px;top:326.00px;height:6.2px;line-height:6.2px;padding:0 0.65px;font-size:5.7px;color:#000;letter-spacing:0.0px;-webkit-text-stroke:0.06px #000;white-space:nowrap;transform:scaleX(0.92);transform-origin:0 0;background:#ffff00;">24: Zwischenriegel_2_o</div><svg style="position:absolute;left:491.0px;top:337.3px;overflow:visible" width="10" height="7" viewBox="0 0 10 7"><path d="M3.9,4.3 L9.6,1 L9.3,2.5 L4,5.6 Z" fill="#3a3a3a"/><path d="M1.2,4.5 L4.2,4.8 L3.8,6.5 L1.1,6.2 Z" fill="#2a2a2a"/><path d="M0.7,3.7 L6.6,0.4 L9.6,0.9 L3.9,4.3 Z" fill="#9c9c8c" stroke="#1a1a1a" stroke-width="0.7" stroke-linejoin="round"/><path d="M2.4,3.3 L7.6,0.95" stroke="#e6e6d8" stroke-width="0.7"/></svg><div style="position:absolute;left:501.60px;top:336.40px;height:6.2px;line-height:6.2px;padding:0 0.65px;font-size:5.7px;color:#000;letter-spacing:0.0px;-webkit-text-stroke:0.06px #000;white-space:nowrap;transform:scaleX(0.92);transform-origin:0 0;background:#ffff00;">25: Zwischenriegel_2_i</div><svg style="position:absolute;left:491.0px;top:347.70000000000005px;overflow:visible" width="10" height="7" viewBox="0 0 10 7"><path d="M3.9,4.3 L9.6,1 L9.3,2.5 L4,5.6 Z" fill="#3a3a3a"/><path d="M1.2,4.5 L4.2,4.8 L3.8,6.5 L1.1,6.2 Z" fill="#2a2a2a"/><path d="M0.7,3.7 L6.6,0.4 L9.6,0.9 L3.9,4.3 Z" fill="#9c9c8c" stroke="#1a1a1a" stroke-width="0.7" stroke-linejoin="round"/><path d="M2.4,3.3 L7.6,0.95" stroke="#e6e6d8" stroke-width="0.7"/></svg><div style="position:absolute;left:501.60px;top:346.80px;height:6.2px;line-height:6.2px;padding:0 0.65px;font-size:5.7px;color:#000;letter-spacing:0.0px;-webkit-text-stroke:0.06px #000;white-space:nowrap;transform:scaleX(0.92);transform-origin:0 0;background:#ffff00;">26: Zwischenriegel_3_o</div><svg style="position:absolute;left:491.0px;top:358.1px;overflow:visible" width="10" height="7" viewBox="0 0 10 7"><path d="M3.9,4.3 L9.6,1 L9.3,2.5 L4,5.6 Z" fill="#3a3a3a"/><path d="M1.2,4.5 L4.2,4.8 L3.8,6.5 L1.1,6.2 Z" fill="#2a2a2a"/><path d="M0.7,3.7 L6.6,0.4 L9.6,0.9 L3.9,4.3 Z" fill="#9c9c8c" stroke="#1a1a1a" stroke-width="0.7" stroke-linejoin="round"/><path d="M2.4,3.3 L7.6,0.95" stroke="#e6e6d8" stroke-width="0.7"/></svg><div style="position:absolute;left:501.60px;top:357.20px;height:6.2px;line-height:6.2px;padding:0 0.65px;font-size:5.7px;color:#000;letter-spacing:0.0px;-webkit-text-stroke:0.06px #000;white-space:nowrap;transform:scaleX(0.92);transform-origin:0 0;background:#ffff00;">27: Zwischenriegel_3_i</div><svg style="position:absolute;left:491.0px;top:368.5px;overflow:visible" width="10" height="7" viewBox="0 0 10 7"><path d="M3.9,4.3 L9.6,1 L9.3,2.5 L4,5.6 Z" fill="#3a3a3a"/><path d="M1.2,4.5 L4.2,4.8 L3.8,6.5 L1.1,6.2 Z" fill="#2a2a2a"/><path d="M0.7,3.7 L6.6,0.4 L9.6,0.9 L3.9,4.3 Z" fill="#9c9c8c" stroke="#1a1a1a" stroke-width="0.7" stroke-linejoin="round"/><path d="M2.4,3.3 L7.6,0.95" stroke="#e6e6d8" stroke-width="0.7"/></svg><div style="position:absolute;left:501.60px;top:367.60px;height:6.2px;line-height:6.2px;padding:0 0.65px;font-size:5.7px;color:#000;letter-spacing:0.0px;-webkit-text-stroke:0.06px #000;white-space:nowrap;transform:scaleX(0.92);transform-origin:0 0;background:#ffff00;">28: Zwischenriegel_4_o</div><svg style="position:absolute;left:491.0px;top:378.90000000000003px;overflow:visible" width="10" height="7" viewBox="0 0 10 7"><path d="M3.9,4.3 L9.6,1 L9.3,2.5 L4,5.6 Z" fill="#3a3a3a"/><path d="M1.2,4.5 L4.2,4.8 L3.8,6.5 L1.1,6.2 Z" fill="#2a2a2a"/><path d="M0.7,3.7 L6.6,0.4 L9.6,0.9 L3.9,4.3 Z" fill="#9c9c8c" stroke="#1a1a1a" stroke-width="0.7" stroke-linejoin="round"/><path d="M2.4,3.3 L7.6,0.95" stroke="#e6e6d8" stroke-width="0.7"/></svg><div style="position:absolute;left:501.60px;top:378.00px;height:6.2px;line-height:6.2px;padding:0 0.65px;font-size:5.7px;color:#000;letter-spacing:0.0px;-webkit-text-stroke:0.06px #000;white-space:nowrap;transform:scaleX(0.92);transform-origin:0 0;background:#ffff00;">29: Zwischenriegel_4_i</div><svg style="position:absolute;left:491.0px;top:389.3px;overflow:visible" width="10" height="7" viewBox="0 0 10 7"><path d="M3.9,4.3 L9.6,1 L9.3,2.5 L4,5.6 Z" fill="#3a3a3a"/><path d="M1.2,4.5 L4.2,4.8 L3.8,6.5 L1.1,6.2 Z" fill="#2a2a2a"/><path d="M0.7,3.7 L6.6,0.4 L9.6,0.9 L3.9,4.3 Z" fill="#9c9c8c" stroke="#1a1a1a" stroke-width="0.7" stroke-linejoin="round"/><path d="M2.4,3.3 L7.6,0.95" stroke="#e6e6d8" stroke-width="0.7"/></svg><div style="position:absolute;left:501.60px;top:388.40px;height:6.2px;line-height:6.2px;padding:0 0.65px;font-size:5.7px;color:#000;letter-spacing:0.0px;-webkit-text-stroke:0.06px #000;white-space:nowrap;transform:scaleX(0.92);transform-origin:0 0;background:#ffff00;">30: Kragstrebe_Lauf6_2</div><svg style="position:absolute;left:491.0px;top:399.70000000000005px;overflow:visible" width="10" height="7" viewBox="0 0 10 7"><path d="M3.9,4.3 L9.6,1 L9.3,2.5 L4,5.6 Z" fill="#3a3a3a"/><path d="M1.2,4.5 L4.2,4.8 L3.8,6.5 L1.1,6.2 Z" fill="#2a2a2a"/><path d="M0.7,3.7 L6.6,0.4 L9.6,0.9 L3.9,4.3 Z" fill="#9c9c8c" stroke="#1a1a1a" stroke-width="0.7" stroke-linejoin="round"/><path d="M2.4,3.3 L7.6,0.95" stroke="#e6e6d8" stroke-width="0.7"/></svg><div style="position:absolute;left:501.60px;top:398.80px;height:6.2px;line-height:6.2px;padding:0 0.65px;font-size:5.7px;color:#000;letter-spacing:0.0px;-webkit-text-stroke:0.06px #000;white-space:nowrap;transform:scaleX(0.92);transform-origin:0 0;background:#ffff00;">31: Schacht_Stütze1</div><svg style="position:absolute;left:491.0px;top:410.1px;overflow:visible" width="10" height="7" viewBox="0 0 10 7"><path d="M3.9,4.3 L9.6,1 L9.3,2.5 L4,5.6 Z" fill="#3a3a3a"/><path d="M1.2,4.5 L4.2,4.8 L3.8,6.5 L1.1,6.2 Z" fill="#2a2a2a"/><path d="M0.7,3.7 L6.6,0.4 L9.6,0.9 L3.9,4.3 Z" fill="#9c9c8c" stroke="#1a1a1a" stroke-width="0.7" stroke-linejoin="round"/><path d="M2.4,3.3 L7.6,0.95" stroke="#e6e6d8" stroke-width="0.7"/></svg><div style="position:absolute;left:501.60px;top:409.20px;height:6.2px;line-height:6.2px;padding:0 0.65px;font-size:5.7px;color:#000;letter-spacing:0.0px;-webkit-text-stroke:0.06px #000;white-space:nowrap;transform:scaleX(0.92);transform-origin:0 0;background:#ffff00;">32: Schacht_Stütze2</div><svg style="position:absolute;left:491.0px;top:420.5px;overflow:visible" width="10" height="7" viewBox="0 0 10 7"><path d="M3.9,4.3 L9.6,1 L9.3,2.5 L4,5.6 Z" fill="#3a3a3a"/><path d="M1.2,4.5 L4.2,4.8 L3.8,6.5 L1.1,6.2 Z" fill="#2a2a2a"/><path d="M0.7,3.7 L6.6,0.4 L9.6,0.9 L3.9,4.3 Z" fill="#9c9c8c" stroke="#1a1a1a" stroke-width="0.7" stroke-linejoin="round"/><path d="M2.4,3.3 L7.6,0.95" stroke="#e6e6d8" stroke-width="0.7"/></svg><div style="position:absolute;left:501.60px;top:419.60px;height:6.2px;line-height:6.2px;padding:0 0.65px;font-size:5.7px;color:#000;letter-spacing:0.0px;-webkit-text-stroke:0.06px #000;white-space:nowrap;transform:scaleX(0.92);transform-origin:0 0;background:#ffff00;">33: Schacht_Stütze3</div><svg style="position:absolute;left:491.0px;top:430.90000000000003px;overflow:visible" width="10" height="7" viewBox="0 0 10 7"><path d="M3.9,4.3 L9.6,1 L9.3,2.5 L4,5.6 Z" fill="#3a3a3a"/><path d="M1.2,4.5 L4.2,4.8 L3.8,6.5 L1.1,6.2 Z" fill="#2a2a2a"/><path d="M0.7,3.7 L6.6,0.4 L9.6,0.9 L3.9,4.3 Z" fill="#9c9c8c" stroke="#1a1a1a" stroke-width="0.7" stroke-linejoin="round"/><path d="M2.4,3.3 L7.6,0.95" stroke="#e6e6d8" stroke-width="0.7"/></svg><div style="position:absolute;left:501.60px;top:430.00px;height:6.2px;line-height:6.2px;padding:0 0.65px;font-size:5.7px;color:#000;letter-spacing:0.0px;-webkit-text-stroke:0.06px #000;white-space:nowrap;transform:scaleX(0.92);transform-origin:0 0;background:#ffff00;">35: Schacht_Stütze4</div><svg style="position:absolute;left:491.0px;top:441.3px;overflow:visible" width="10" height="7" viewBox="0 0 10 7"><path d="M3.9,4.3 L9.6,1 L9.3,2.5 L4,5.6 Z" fill="#3a3a3a"/><path d="M1.2,4.5 L4.2,4.8 L3.8,6.5 L1.1,6.2 Z" fill="#2a2a2a"/><path d="M0.7,3.7 L6.6,0.4 L9.6,0.9 L3.9,4.3 Z" fill="#9c9c8c" stroke="#1a1a1a" stroke-width="0.7" stroke-linejoin="round"/><path d="M2.4,3.3 L7.6,0.95" stroke="#e6e6d8" stroke-width="0.7"/></svg><div style="position:absolute;left:501.60px;top:440.40px;height:6.2px;line-height:6.2px;padding:0 0.65px;font-size:5.7px;color:#000;letter-spacing:0.0px;-webkit-text-stroke:0.06px #000;white-space:nowrap;transform:scaleX(0.92);transform-origin:0 0;background:#ffff00;">37: Zwischenriegel_5_i</div><svg style="position:absolute;left:491.0px;top:451.70000000000005px;overflow:visible" width="10" height="7" viewBox="0 0 10 7"><path d="M3.9,4.3 L9.6,1 L9.3,2.5 L4,5.6 Z" fill="#3a3a3a"/><path d="M1.2,4.5 L4.2,4.8 L3.8,6.5 L1.1,6.2 Z" fill="#2a2a2a"/><path d="M0.7,3.7 L6.6,0.4 L9.6,0.9 L3.9,4.3 Z" fill="#9c9c8c" stroke="#1a1a1a" stroke-width="0.7" stroke-linejoin="round"/><path d="M2.4,3.3 L7.6,0.95" stroke="#e6e6d8" stroke-width="0.7"/></svg><div style="position:absolute;left:501.60px;top:450.80px;height:6.2px;line-height:6.2px;padding:0 0.65px;font-size:5.7px;color:#000;letter-spacing:0.0px;-webkit-text-stroke:0.06px #000;white-space:nowrap;transform:scaleX(0.92);transform-origin:0 0;background:#ffff00;">38: Zwischenriegel_5_o</div><svg style="position:absolute;left:492.5px;top:462.7px;overflow:visible" width="8" height="5" viewBox="0 0 8 5"><path d="M0.4,3.8 L7.8,0.4" stroke="#111" stroke-width="0.95"/></svg><div style="position:absolute;left:501.60px;top:461.20px;height:6.2px;line-height:6.2px;padding:0 0.65px;font-size:5.7px;color:#000;letter-spacing:0.0px;-webkit-text-stroke:0.06px #000;white-space:nowrap;transform:scaleX(0.92);transform-origin:0 0;background:#ffff00;">5: Stab 5</div></div></div><div style="position:absolute;left:664px;top:81px;width:8px;height:380px;background:linear-gradient(90deg,#e4e4e4 0,#d6d6d6 4px,#7a7a7a 4px,#7a7a7a 5px,#d4d4d4 5px,#d4d4d4 7px,#b0b0b0 7px)"></div><div style="position:absolute;left:664px;top:81px;width:8px;height:45px;background:#e4e4e4;box-shadow:inset 1px 1px 0 #fafafa, inset -1px -1px 0 #8a8a8a"></div><div style="position:absolute;left:664px;top:73px;width:8px;height:8px;background:#e2e2e2;box-shadow:inset 1px 1px 0 #fff, inset -1px -1px 0 #8c8c8c"></div><svg style="position:absolute;left:665.7px;top:75.6px;overflow:visible" width="4.6" height="2.7" viewBox="0 0 4.6 2.7"><path d="M2.3,0 L4.6,2.7 L0,2.7 Z" fill="#000"/></svg><div style="position:absolute;left:664px;top:461px;width:8px;height:8px;background:#e2e2e2;box-shadow:inset 1px 1px 0 #fff, inset -1px -1px 0 #8c8c8c"></div><svg style="position:absolute;left:665.7px;top:463.6px;overflow:visible" width="4.6" height="2.7" viewBox="0 0 4.6 2.7"><path d="M0,0 L4.6,0 L2.3,2.7 Z" fill="#000"/></svg><div style="position:absolute;left:483px;top:469px;width:173px;height:8px;background:#dedede"></div><div style="position:absolute;left:475px;top:469px;width:8px;height:8px;background:#dadada;box-shadow:inset 1px 1px 0 #f0f0f0, inset -1px -1px 0 #b8b8b8"></div><svg style="position:absolute;left:477.6px;top:470.5px;overflow:visible" width="2.8" height="5" viewBox="0 0 2.8 5"><path d="M0,2.5 L2.8,0 L2.8,5 Z" fill="#a4a4a4"/></svg><div style="position:absolute;left:656px;top:469px;width:8px;height:8px;background:#dadada;box-shadow:inset 1px 1px 0 #f0f0f0, inset -1px -1px 0 #b8b8b8"></div><svg style="position:absolute;left:658.6px;top:470.5px;overflow:visible" width="2.8" height="5" viewBox="0 0 2.8 5"><path d="M0,0 L2.8,2.5 L0,5 Z" fill="#a4a4a4"/></svg><div style="position:absolute;left:664px;top:469px;width:8px;height:8px;background:#d2d2d2"></div><div style="position:absolute;left:0;width:682px;top:481.8px;text-align:center;line-height:5.9px;font-size:5.45px;color:#111;-webkit-text-stroke:0.06px #111;font-family:'Liberation Sans',sans-serif;white-space:nowrap">An-/Abwählen von Ergebnisarten, Tabellen und Objekten mit der linken Maustaste.<br>Anzeige der Tabellen einer Ergebnisart bzw. der Objekte einer Tabelle durch Doppelklick mit der linken Maustaste.</div><div style="position:absolute;left:1px;top:495px;width:680px;height:1px;background:#9e9e9e"></div><div style="position:absolute;left:1px;top:496px;width:680px;height:1px;background:#f2f2f2"></div><div style="position:absolute;left:189px;top:499px;width:12px;height:10px;background:#f0f0f0;box-shadow:inset 1px 1px 0 #fff, 1px 1px 0 #909090, 2px 2px 0 #b0b0b0"></div><svg style="position:absolute;left:191px;top:500.5px;overflow:visible" width="8" height="7" viewBox="0 0 8 7"><path d="M0.8,0.8 L7,6.4 M7,0.8 L0.8,6.4" stroke="#f01010" stroke-width="1.5"/></svg><div style="position:absolute;left:281px;top:499px;width:17px;height:10px;background:#f0f0f0;box-shadow:inset 1px 1px 0 #fff, 1px 1px 0 #909090, 2px 2px 0 #b0b0b0"></div><svg style="position:absolute;left:283px;top:500.5px;overflow:visible" width="14" height="8" viewBox="0 0 14 8"><path d="M0.5,2.2 H7 M5.5,0.8 L7.2,2.2 L5.5,3.6" fill="none" stroke="#10b010" stroke-width="0.9"/><path d="M1.5,5.6 H7.5 M3,4.2 L1.3,5.6 L3,7" fill="none" stroke="#e01010" stroke-width="0.9"/><rect x="8.6" y="0.9" width="3.8" height="6.2" fill="#b0a838" stroke="#3a3a20" stroke-width="0.7"/><path d="M9.4,2.4 h2.2 M9.4,4 h2.2 M9.4,5.6 h2.2" stroke="#d8d070" stroke-width="0.4"/></svg><div style="position:absolute;left:380px;top:499px;width:12px;height:10px;background:#f0f0f0;box-shadow:inset 1px 1px 0 #fff, 1px 1px 0 #909090, 2px 2px 0 #b0b0b0"></div><svg style="position:absolute;left:382.5px;top:500px;overflow:visible" width="8" height="9" viewBox="0 0 8 9"><path d="M2,1.6 C3.4,0.4 5.8,0.8 5.5,2.4 C5.2,3.6 3.2,3.8 3.3,5 C3.4,5.8 5,5.8 5,6.8 C5,7.6 3.8,8 3,7.6" fill="none" stroke="#1a8cb8" stroke-width="1.1"/></svg><div style="position:absolute;left:474px;top:499px;width:13px;height:10px;background:#f0f0f0;box-shadow:inset 1px 1px 0 #fff, 1px 1px 0 #909090, 2px 2px 0 #b0b0b0"></div><svg style="position:absolute;left:476px;top:500.5px;overflow:visible" width="10" height="8" viewBox="0 0 10 8"><path d="M0.8,4.2 L3.4,6.8 L8.8,0.8" fill="none" stroke="#10a010" stroke-width="1.4"/></svg></div>
</body></html>
